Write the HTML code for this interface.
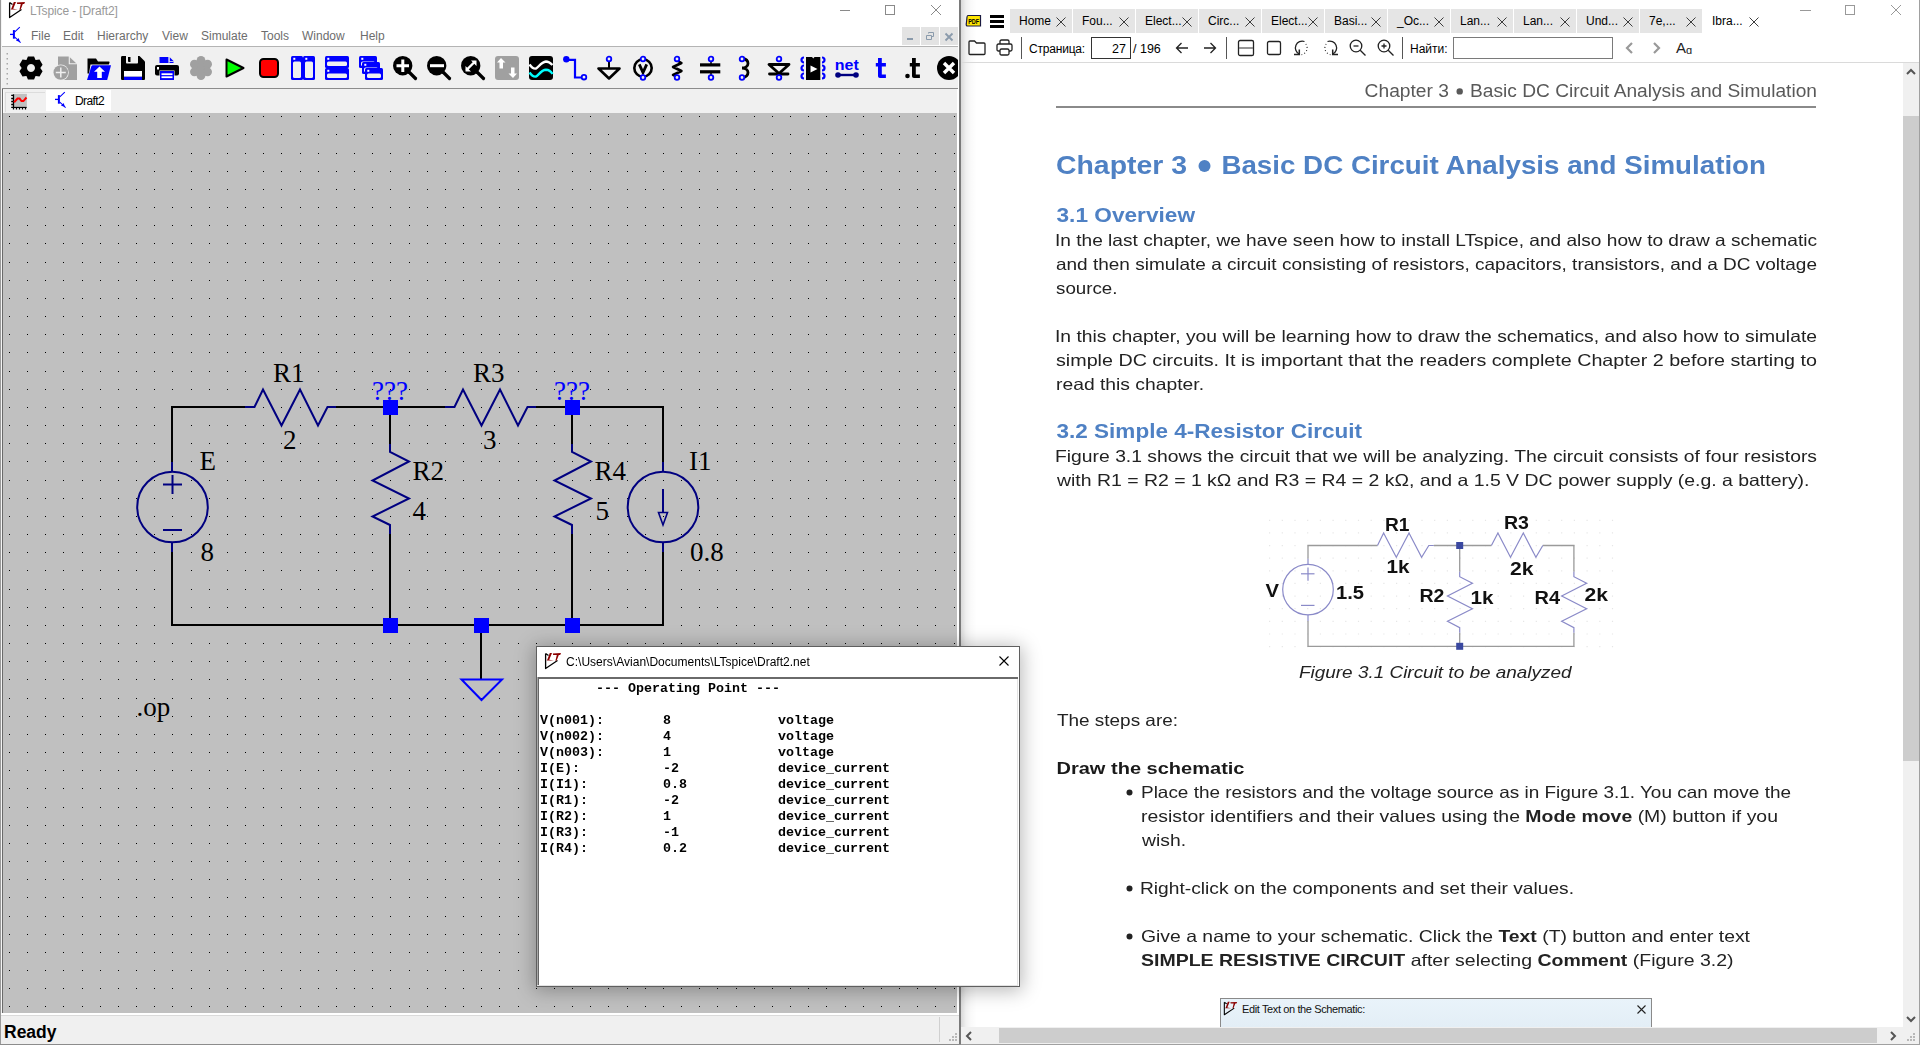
<!DOCTYPE html>
<html><head><meta charset="utf-8"><style>
*{box-sizing:border-box}
html,body{margin:0;padding:0}
body{width:1920px;height:1045px;position:relative;overflow:hidden;background:#fff;font-family:"Liberation Sans",sans-serif}
.a{position:absolute}
svg{position:absolute;overflow:visible}
</style></head><body>
<!-- LTspice window -->
<div class="a" style="left:0;top:0;width:961px;height:1045px;background:#fff"></div>
<div class="a" style="left:0;top:0;width:1px;height:1045px;background:#9a9a9a"></div>
<div class="a" style="left:959px;top:0;width:2px;height:1045px;background:#7a7a7a"></div>
<!-- title -->
<svg class="a" style="left:8px;top:1px" width="18" height="18" viewBox="0 0 18 18"><path d="M1.6 1.5V16.5L13.5 8.5M1.6 1.5L4.5 3.5" fill="none" stroke="#000" stroke-width="1.3" stroke-linejoin="round"/><path d="M5.8 1H8L5.2 7.8L9.8 8.6H2.6L3.4 7.6Z" fill="#8b0000"/><path d="M8.8 1.4L17 1.1L16.2 2.9H14.8L12.6 8.8H11.4L12.8 3H9.2Z" fill="#8b0000"/></svg>
<div class="a" style="left:30px;top:4px;font-size:12px;line-height:15px;color:#999;white-space:pre;letter-spacing:-0.12px">LTspice - [Draft2]</div>
<!-- window buttons -->
<div class="a" style="left:840px;top:10px;width:10px;height:1px;background:#8a8a8a"></div>
<div class="a" style="left:885px;top:5px;width:10px;height:10px;border:1px solid #8a8a8a"></div>
<svg class="a" style="left:931px;top:5px" width="10" height="10" viewBox="0 0 10 10"><path d="M0 0L10 10M10 0L0 10" stroke="#8a8a8a" stroke-width="1"/></svg>
<!-- menu -->
<svg class="a" style="left:8px;top:25px" width="14" height="19" viewBox="0 0 14 19"><path d="M2 9.4H5.5" stroke="#0000ff" stroke-width="1.3"/><rect x="4.9" y="5.1" width="2" height="8.6" fill="#0000ff"/><path d="M6.8 6.8L11.8 2.2M6.8 12.2L12.6 17.6" stroke="#0000ff" stroke-width="1.1" fill="none"/><path d="M8 15.7L10.6 13L11.9 16.8Z" fill="#0000ff"/></svg>
<div class="a" style="left:31px;top:29px;font-size:12px;line-height:15px;color:#6d6d6d;white-space:pre">File</div>
<div class="a" style="left:63px;top:29px;font-size:12px;line-height:15px;color:#6d6d6d;white-space:pre">Edit</div>
<div class="a" style="left:97px;top:29px;font-size:12px;line-height:15px;color:#6d6d6d;white-space:pre">Hierarchy</div>
<div class="a" style="left:162px;top:29px;font-size:12px;line-height:15px;color:#6d6d6d;white-space:pre">View</div>
<div class="a" style="left:201px;top:29px;font-size:12px;line-height:15px;color:#6d6d6d;white-space:pre">Simulate</div>
<div class="a" style="left:261px;top:29px;font-size:12px;line-height:15px;color:#6d6d6d;white-space:pre">Tools</div>
<div class="a" style="left:302px;top:29px;font-size:12px;line-height:15px;color:#6d6d6d;white-space:pre">Window</div>
<div class="a" style="left:360px;top:29px;font-size:12px;line-height:15px;color:#6d6d6d;white-space:pre">Help</div>
<!-- MDI buttons -->
<div class="a" style="left:902px;top:27px;width:18px;height:18px;background:#e3e3e3"></div>
<div class="a" style="left:921px;top:27px;width:18px;height:18px;background:#e3e3e3"></div>
<div class="a" style="left:940px;top:27px;width:18px;height:18px;background:#e3e3e3"></div>
<div class="a" style="left:907px;top:38px;width:6px;height:2px;background:#8a9aab"></div>
<svg class="a" style="left:926px;top:32px" width="8" height="8" viewBox="0 0 8 8"><path d="M0.5 3.5h5v4h-5zM2.5 1.5V0.5h5v4h-2" fill="none" stroke="#8a9aab" stroke-width="1"/></svg>
<svg class="a" style="left:945px;top:33px" width="8" height="8" viewBox="0 0 8 8"><path d="M0.5 0.5L7.5 7.5M7.5 0.5L0.5 7.5" stroke="#8a9aab" stroke-width="1.8"/></svg>
<!-- menu bottom / toolbar -->
<div class="a" style="left:1px;top:46px;width:957px;height:1px;background:#b4b4b4"></div>
<div class="a" style="left:1px;top:47px;width:957px;height:41px;background:#f0f0f0"></div>
<div class="a" style="left:1px;top:88px;width:957px;height:1px;background:#8c8c8c"></div><div class="a" style="left:2px;top:89px;width:956px;height:1px;background:#6a6a6a"></div><div class="a" style="left:3px;top:90px;width:955px;height:1px;background:#fafafa"></div>
<!-- tab bar -->
<div class="a" style="left:1px;top:89px;width:957px;height:24px;background:#f0f0f0"></div><div class="a" style="left:1px;top:0;width:1px;height:1044px;background:#f4f4f4"></div>
<div class="a" style="left:2px;top:89px;width:1px;height:925px;background:#6a6a6a"></div><div class="a" style="left:3px;top:90px;width:1px;height:23px;background:#fafafa"></div>
<div class="a" style="left:5px;top:92px;width:40px;height:20px;border-left:1px solid #dcdcdc;border-top:1px solid #dcdcdc"></div>
<div class="a" style="left:46px;top:90px;width:65px;height:21px;background:#fff"></div>
<!-- status bar -->
<div class="a" style="left:1px;top:1013px;width:958px;height:2px;background:#fff"></div>
<div class="a" style="left:1px;top:1015px;width:958px;height:1px;background:#dadada"></div>
<div class="a" style="left:1px;top:1016px;width:958px;height:28px;background:#f0f0f0"></div>
<div class="a" style="left:0px;top:1044px;width:961px;height:1px;background:#8c8c8c"></div>
<div class="a" style="left:939px;top:1017px;width:1px;height:25px;background:#d0d0d0"></div>
<div class="a" style="left:957px;top:89px;width:2px;height:924px;background:#fff"></div>
<div class="a" style="left:4px;top:1022px;font-size:17.5px;font-weight:bold;line-height:20px;color:#000;white-space:pre">Ready</div>
<svg class="a" style="left:949px;top:1033px" width="9" height="9" viewBox="0 0 9 9"><path d="M6 0h2v2h-2zM3 3h2v2h-2zM6 3h2v2h-2zM0 6h2v2h-2zM3 6h2v2h-2zM6 6h2v2h-2z" fill="#b8b8b8"/></svg>
<svg class="a" style="left:6px;top:52px" width="3" height="35" viewBox="0 0 3 35"><rect x="0.5" y="1" width="1.5" height="1.5" fill="#a8a8a8"/><rect x="0.5" y="6" width="1.5" height="1.5" fill="#a8a8a8"/><rect x="0.5" y="11" width="1.5" height="1.5" fill="#a8a8a8"/><rect x="0.5" y="16" width="1.5" height="1.5" fill="#a8a8a8"/><rect x="0.5" y="21" width="1.5" height="1.5" fill="#a8a8a8"/><rect x="0.5" y="26" width="1.5" height="1.5" fill="#a8a8a8"/><rect x="0.5" y="31" width="1.5" height="1.5" fill="#a8a8a8"/></svg><div class="a" style="left:0;top:0;width:958px;height:88px;overflow:hidden"><svg class="a" style="left:19px;top:56px" width="24" height="24" viewBox="0 0 24 24"><path fill-rule="evenodd" fill="#000" d="M7.45 3.89L8.93 0.40L15.07 0.40L16.55 3.89L16.75 4.01L20.51 3.54L23.58 8.85L21.30 11.88L21.30 12.12L23.58 15.15L20.51 20.46L16.75 19.99L16.55 20.11L15.07 23.60L8.93 23.60L7.45 20.11L7.25 19.99L3.49 20.46L0.42 15.15L2.70 12.12L2.70 11.88L0.42 8.85L3.49 3.54L7.25 4.01Z M12 8 a4 4 0 1 0 0.01 0Z"/></svg><svg class="a" style="left:53px;top:56px" width="24" height="24" viewBox="0 0 24 24"><path d="M5 0.5h11l8 7.5v16H5z" fill="#a0a0a0"/><path d="M16.3 0v7.8h8" fill="none" stroke="#f0f0f0" stroke-width="1.1"/><circle cx="7.8" cy="16.5" r="8" fill="#f0f0f0"/><circle cx="7.8" cy="16.5" r="7.3" fill="#a0a0a0"/><path d="M7.8 11.5v10M2.8 16.5h10" stroke="#f0f0f0" stroke-width="1.5"/></svg><svg class="a" style="left:87px;top:56px" width="24" height="24" viewBox="0 0 24 24"><path d="M0.5 2.5h8.5l2 3h10.5c0.8 0 1.2 0.5 1 1.2L21.8 8.5H3.5l-1.5 9H0.5z" fill="#000"/><path d="M0 24L4.3 10.5c0.3-0.8 0.8-1.2 1.6-1.2H24L20.2 24z" fill="#0000ff"/><path d="M12.5 10.5l5.5 5.2h-3.2v6.3h-4.6v-6.3H7z" fill="#fff"/></svg><svg class="a" style="left:121px;top:56px" width="24" height="24" viewBox="0 0 24 24"><path d="M1.5 0h17l5.5 5.5v17c0 1-0.5 1.5-1.5 1.5H1.5C0.5 24 0 23.5 0 22.5v-21C0 0.5 0.5 0 1.5 0z" fill="#000"/><path d="M5 0h12v6.5c0 0.5-0.5 1-1 1H6c-0.5 0-1-0.5-1-1z" fill="#f0f0f0"/><path d="M7 1h2.5v5h-1.5c-0.5 0-1-0.5-1-1z" fill="#000"/><rect x="3" y="15" width="18" height="5.8" fill="#fff"/><rect x="3" y="20.8" width="18" height="3.2" fill="#0000ff"/></svg><svg class="a" style="left:155px;top:56px" width="24" height="24" viewBox="0 0 24 24"><path d="M4.5 1h9v6h-9z" fill="#0000ff"/><path d="M14.5 1l4 4v2h-4z" fill="#0000ff"/><path d="M14.2 0.5v5h4.5" fill="none" stroke="#f0f0f0" stroke-width="0.8"/><rect x="0" y="9" width="24" height="10.5" rx="2" fill="#000"/><rect x="2" y="11" width="2" height="2.5" fill="#fff"/><rect x="4.5" y="14.5" width="15" height="9.5" fill="#f0f0f0"/><rect x="5" y="15" width="14" height="9" fill="#0000ff"/><rect x="6.5" y="17.3" width="11" height="1.8" fill="#fff"/><rect x="6.5" y="20.3" width="11" height="1.8" fill="#fff"/></svg><svg class="a" style="left:189px;top:56px" width="24" height="24" viewBox="0 0 24 24"><g fill="#a0a0a0"><circle cx="12" cy="12" r="8.8"/><circle cx="12.00" cy="4.40" r="4.4"/><circle cx="18.58" cy="8.20" r="4.4"/><circle cx="18.58" cy="15.80" r="4.4"/><circle cx="12.00" cy="19.60" r="4.4"/><circle cx="5.42" cy="15.80" r="4.4"/><circle cx="5.42" cy="8.20" r="4.4"/></g></svg><svg class="a" style="left:223px;top:56px" width="24" height="24" viewBox="0 0 24 24"><path d="M3.5 3.5L20.5 12L3.5 20.5Z" fill="#00ff00" stroke="#000" stroke-width="2" stroke-linejoin="round"/></svg><svg class="a" style="left:257px;top:56px" width="24" height="24" viewBox="0 0 24 24"><rect x="3" y="3" width="18" height="18" rx="3.5" fill="#ff0000" stroke="#000" stroke-width="2"/></svg><svg class="a" style="left:291px;top:56px" width="24" height="24" viewBox="0 0 24 24"><rect x="0" y="0" width="12" height="24" rx="1.5" fill="#0000ff"/><rect x="2" y="5.5" width="8" height="16.5" rx="1.5" fill="#f0f0f0"/><rect x="2.3" y="1.8" width="2" height="2" fill="#fff"/><rect x="12" y="0" width="12" height="24" rx="1.5" fill="#0000ff"/><rect x="14" y="5.5" width="8" height="16.5" rx="1.5" fill="#f0f0f0"/><rect x="14.3" y="1.8" width="2" height="2" fill="#fff"/></svg><svg class="a" style="left:325px;top:56px" width="24" height="24" viewBox="0 0 24 24"><rect x="0" y="0" width="24" height="12" rx="1.5" fill="#0000ff"/><rect x="2" y="5.5" width="20" height="4.5" rx="1.5" fill="#f0f0f0"/><rect x="2.3" y="1.8" width="2" height="2" fill="#fff"/><rect x="0" y="12" width="24" height="12" rx="1.5" fill="#0000ff"/><rect x="2" y="17.5" width="20" height="4.5" rx="1.5" fill="#f0f0f0"/><rect x="2.3" y="13.8" width="2" height="2" fill="#fff"/></svg><svg class="a" style="left:359px;top:56px" width="24" height="24" viewBox="0 0 24 24"><rect x="0" y="0" width="18" height="12" rx="1.5" fill="#0000ff"/><rect x="2" y="5.5" width="14" height="4.5" rx="1.5" fill="#f0f0f0"/><rect x="2.3" y="1.8" width="2" height="2" fill="#fff"/><rect x="3" y="6" width="18" height="12" rx="1.5" fill="#0000ff"/><rect x="5" y="11.5" width="14" height="4.5" rx="1.5" fill="#f0f0f0"/><rect x="5.3" y="7.8" width="2" height="2" fill="#fff"/><rect x="6" y="12" width="18" height="12" rx="1.5" fill="#0000ff"/><rect x="8" y="17.5" width="14" height="4.5" rx="1.5" fill="#f0f0f0"/><rect x="8.3" y="13.8" width="2" height="2" fill="#fff"/></svg><svg class="a" style="left:393px;top:56px" width="24" height="24" viewBox="0 0 24 24"><circle cx="9.7" cy="9.7" r="9.7" fill="#000"/><path d="M16 16L22.5 22.5" stroke="#000" stroke-width="3.2" stroke-linecap="round"/><path d="M3.5 9.8h12.5M9.8 3.5v12.5" stroke="#fff" stroke-width="3"/></svg><svg class="a" style="left:427px;top:56px" width="24" height="24" viewBox="0 0 24 24"><circle cx="9.7" cy="9.7" r="9.7" fill="#000"/><path d="M16 16L22.5 22.5" stroke="#000" stroke-width="3.2" stroke-linecap="round"/><rect x="3" y="8.2" width="14" height="3" fill="#fff"/></svg><svg class="a" style="left:461px;top:56px" width="24" height="24" viewBox="0 0 24 24"><circle cx="9.7" cy="9.7" r="9.7" fill="#000"/><path d="M16 16L22.5 22.5" stroke="#000" stroke-width="3.2" stroke-linecap="round"/><path d="M5.5 14L14 5.5" stroke="#fff" stroke-width="2.4"/><path d="M10 4.5h5.5v5.5zM4.5 10v5.5h5.5z" fill="#fff"/></svg><svg class="a" style="left:495px;top:56px" width="24" height="24" viewBox="0 0 24 24"><rect x="0" y="0" width="24" height="24" rx="3" fill="#a0a0a0"/><path d="M6 2.5L10.5 7H8v6H4.5V7H2z" fill="#fff" transform="translate(0,-0.5)"/><path d="M18 21.5L13.5 17H16V11h3.5v6H22z" fill="#fff" transform="translate(0,0.5)"/></svg><svg class="a" style="left:529px;top:56px" width="24" height="24" viewBox="0 0 24 24"><rect x="0" y="0" width="24" height="24" rx="3" fill="#000"/><path d="M0.5 8.5C3 12 5 13 7 12.5S12 6 17 5.5C20 5.5 22 7.5 23.5 9" fill="none" stroke="#fff" stroke-width="2.4"/><path d="M0.5 16.5C3 20 5 21 7 20.5S12 14 17 13.8C20 13.8 22 15.5 23.5 18" fill="none" stroke="#00ffff" stroke-width="2.4"/></svg><svg class="a" style="left:563px;top:56px" width="24" height="24" viewBox="0 0 24 24"><circle cx="3.3" cy="3.3" r="3.2" fill="#0000ff"/><path d="M3.3 3.8H12V21.5H19" fill="none" stroke="#0000ff" stroke-width="2.2"/><circle cx="21" cy="21.2" r="2.3" fill="#f0f0f0" stroke="#0000ff" stroke-width="1.8"/></svg><svg class="a" style="left:597px;top:56px" width="24" height="24" viewBox="0 0 24 24"><path d="M12 5v7" stroke="#000" stroke-width="2"/><path d="M1.5 12.5H22.5L12 22.5Z" fill="none" stroke="#000" stroke-width="2.6" stroke-linejoin="round"/><circle cx="12" cy="3" r="2.3" fill="#f0f0f0" stroke="#0000ff" stroke-width="1.8"/></svg><svg class="a" style="left:631px;top:56px" width="24" height="24" viewBox="0 0 24 24"><circle cx="12" cy="12" r="8.7" fill="none" stroke="#000" stroke-width="2.6"/><path d="M8.3 8.3L12 16.5L15.7 8.3" fill="none" stroke="#000" stroke-width="2.8" stroke-linejoin="miter"/><circle cx="12" cy="3" r="2.3" fill="#f0f0f0" stroke="#0000ff" stroke-width="1.8"/><circle cx="12" cy="21.5" r="2.3" fill="#f0f0f0" stroke="#0000ff" stroke-width="1.8"/></svg><svg class="a" style="left:665px;top:56px" width="24" height="24" viewBox="0 0 24 24"><path d="M12 4.5L16.5 7L8 11L16.5 15L8 19L12 21" fill="none" stroke="#000" stroke-width="2.5" stroke-linejoin="round" stroke-linecap="round"/><circle cx="12" cy="3" r="2.3" fill="#f0f0f0" stroke="#0000ff" stroke-width="1.8"/><circle cx="12" cy="21.5" r="2.3" fill="#f0f0f0" stroke="#0000ff" stroke-width="1.8"/></svg><svg class="a" style="left:699px;top:56px" width="24" height="24" viewBox="0 0 24 24"><path d="M12 5V9M12 16V20" stroke="#000" stroke-width="1.5"/><rect x="1" y="7.3" width="20.3" height="3.2" fill="#000"/><rect x="1" y="14.2" width="20.3" height="3.2" fill="#000"/><circle cx="12" cy="3" r="2.3" fill="#f0f0f0" stroke="#0000ff" stroke-width="1.8"/><circle cx="12" cy="21.5" r="2.3" fill="#f0f0f0" stroke="#0000ff" stroke-width="1.8"/></svg><svg class="a" style="left:733px;top:56px" width="24" height="24" viewBox="0 0 24 24"><path d="M9.5 2.5C13 3 15 5 15 7.5S12.5 12 9 12C12.5 12 15 14 15 16.5S13 21 9.5 21.5" fill="none" stroke="#000" stroke-width="2.8"/><circle cx="9" cy="3" r="2.3" fill="#f0f0f0" stroke="#0000ff" stroke-width="1.8"/><circle cx="9" cy="21.5" r="2.3" fill="#f0f0f0" stroke="#0000ff" stroke-width="1.8"/></svg><svg class="a" style="left:767px;top:56px" width="24" height="24" viewBox="0 0 24 24"><path d="M2 8.5H22L12 17.5Z" fill="none" stroke="#000" stroke-width="2.8" stroke-linejoin="round"/><path d="M2.5 18H21" stroke="#000" stroke-width="2.8" stroke-linecap="round"/><circle cx="12" cy="3" r="2.3" fill="#f0f0f0" stroke="#0000ff" stroke-width="1.8"/><circle cx="12" cy="21.5" r="2.3" fill="#f0f0f0" stroke="#0000ff" stroke-width="1.8"/></svg><svg class="a" style="left:801px;top:56px" width="24" height="24" viewBox="0 0 24 24"><path d="M3 1.5A2.5 2.5 0 0 0 3 6.5M3 9.5A2.5 2.5 0 0 0 3 14.5M3 17.5A2.5 2.5 0 0 0 3 22.5M21 1.5A2.5 2.5 0 0 1 21 6.5M21 9.5A2.5 2.5 0 0 1 21 14.5M21 17.5A2.5 2.5 0 0 1 21 22.5" stroke="#0000ff" stroke-width="2.2" fill="none"/><rect x="5" y="1" width="14.3" height="23" fill="#000"/><path d="M11 1h2.5l-1.2 1.5z" fill="#f0f0f0"/><path d="M9.5 9.5L16.5 13L9.5 16.5z" fill="#fff"/></svg><svg class="a" style="left:835px;top:56px" width="24" height="24" viewBox="0 0 24 24"><text x="-0.3" y="14" font-family="Liberation Sans" font-weight="bold" font-size="14" fill="#0000ff" textLength="24" lengthAdjust="spacingAndGlyphs">net</text><path d="M3 19H21" stroke="#000080" stroke-width="2.4"/><circle cx="3" cy="19" r="2.8" fill="#000080"/><circle cx="21" cy="19" r="2.8" fill="#000080"/></svg><svg class="a" style="left:869px;top:56px" width="24" height="24" viewBox="0 0 24 24"><path d="M9 2H12.8V7H16.9V10.5H12.8V18.5H16.9V22H11C9.8 22 9 21 9 20V10.5H6.8V7H9Z" fill="#0000ff"/></svg><svg class="a" style="left:903px;top:56px" width="24" height="24" viewBox="0 0 24 24"><circle cx="4.5" cy="20" r="2.3" fill="#000"/><path d="M9 2H12.8V7H16.9V10.5H12.8V18.5H16.9V22H11C9.8 22 9 21 9 20V10.5H6.8V7H9Z" fill="#000"/></svg><svg class="a" style="left:937px;top:56px" width="24" height="24" viewBox="0 0 24 24"><circle cx="12" cy="12" r="12" fill="#000"/><path d="M7 7L17 17M17 7L7 17" stroke="#fff" stroke-width="3.4"/></svg></div><svg class="a" style="left:8px;top:91px" width="22" height="22" viewBox="0 0 22 22"><rect x="6.1" y="2.9" width="12.8" height="12.5" fill="#c0c0c0"/><path d="M5.5 3.2V18.5M3.2 16.4H18.7M3.2 4.4H5.5M3.2 7.5H5.5M3.2 10.5H5.5M3.2 13.5H5.5M5.5 16.4V18.5M8.5 16.4V18.5M11.5 16.4V18.5M14.5 16.4V18.5M17.5 16.4V18.5" stroke="#000" stroke-width="1.3" fill="none"/><path d="M6.1 11.2L9.5 7.6H11.6L13.5 10.1H15.4L18.5 6.5" stroke="#ff0000" stroke-width="2" fill="none"/></svg><svg class="a" style="left:53px;top:90px" width="14" height="19" viewBox="0 0 14 19"><path d="M2 9.4H5.5" stroke="#0000ff" stroke-width="1.3"/><rect x="4.9" y="5.1" width="2" height="8.6" fill="#0000ff"/><path d="M6.8 6.8L11.8 2.2M6.8 12.2L12.6 17.6" stroke="#0000ff" stroke-width="1.1" fill="none"/><path d="M8 15.7L10.6 13L11.9 16.8Z" fill="#0000ff"/></svg><div class="a" style="left:75px;top:94px;font-size:12px;line-height:14px;color:#000;white-space:pre;letter-spacing:-0.6px">Draft2</div><svg class="a" style="left:0;top:0" width="1920" height="1045" viewBox="0 0 1920 1045"><defs><clipPath id="cv"><rect x="3" y="113" width="954" height="900"/></clipPath></defs><g clip-path="url(#cv)"><rect x="3" y="113" width="954" height="900" fill="#c0c0c0"/><path fill="#000" d="M9 116h1v1h-1zM27 116h1v1h-1zM45 116h1v1h-1zM63 116h1v1h-1zM82 116h1v1h-1zM100 116h1v1h-1zM118 116h1v1h-1zM136 116h1v1h-1zM154 116h1v1h-1zM172 116h1v1h-1zM191 116h1v1h-1zM209 116h1v1h-1zM227 116h1v1h-1zM245 116h1v1h-1zM263 116h1v1h-1zM281 116h1v1h-1zM300 116h1v1h-1zM318 116h1v1h-1zM336 116h1v1h-1zM354 116h1v1h-1zM372 116h1v1h-1zM390 116h1v1h-1zM409 116h1v1h-1zM427 116h1v1h-1zM445 116h1v1h-1zM463 116h1v1h-1zM481 116h1v1h-1zM499 116h1v1h-1zM518 116h1v1h-1zM536 116h1v1h-1zM554 116h1v1h-1zM572 116h1v1h-1zM590 116h1v1h-1zM608 116h1v1h-1zM627 116h1v1h-1zM645 116h1v1h-1zM663 116h1v1h-1zM681 116h1v1h-1zM699 116h1v1h-1zM717 116h1v1h-1zM736 116h1v1h-1zM754 116h1v1h-1zM772 116h1v1h-1zM790 116h1v1h-1zM808 116h1v1h-1zM826 116h1v1h-1zM845 116h1v1h-1zM863 116h1v1h-1zM881 116h1v1h-1zM899 116h1v1h-1zM917 116h1v1h-1zM935 116h1v1h-1zM954 116h1v1h-1zM9 134h1v1h-1zM27 134h1v1h-1zM45 134h1v1h-1zM63 134h1v1h-1zM82 134h1v1h-1zM100 134h1v1h-1zM118 134h1v1h-1zM136 134h1v1h-1zM154 134h1v1h-1zM172 134h1v1h-1zM191 134h1v1h-1zM209 134h1v1h-1zM227 134h1v1h-1zM245 134h1v1h-1zM263 134h1v1h-1zM281 134h1v1h-1zM300 134h1v1h-1zM318 134h1v1h-1zM336 134h1v1h-1zM354 134h1v1h-1zM372 134h1v1h-1zM390 134h1v1h-1zM409 134h1v1h-1zM427 134h1v1h-1zM445 134h1v1h-1zM463 134h1v1h-1zM481 134h1v1h-1zM499 134h1v1h-1zM518 134h1v1h-1zM536 134h1v1h-1zM554 134h1v1h-1zM572 134h1v1h-1zM590 134h1v1h-1zM608 134h1v1h-1zM627 134h1v1h-1zM645 134h1v1h-1zM663 134h1v1h-1zM681 134h1v1h-1zM699 134h1v1h-1zM717 134h1v1h-1zM736 134h1v1h-1zM754 134h1v1h-1zM772 134h1v1h-1zM790 134h1v1h-1zM808 134h1v1h-1zM826 134h1v1h-1zM845 134h1v1h-1zM863 134h1v1h-1zM881 134h1v1h-1zM899 134h1v1h-1zM917 134h1v1h-1zM935 134h1v1h-1zM954 134h1v1h-1zM9 153h1v1h-1zM27 153h1v1h-1zM45 153h1v1h-1zM63 153h1v1h-1zM82 153h1v1h-1zM100 153h1v1h-1zM118 153h1v1h-1zM136 153h1v1h-1zM154 153h1v1h-1zM172 153h1v1h-1zM191 153h1v1h-1zM209 153h1v1h-1zM227 153h1v1h-1zM245 153h1v1h-1zM263 153h1v1h-1zM281 153h1v1h-1zM300 153h1v1h-1zM318 153h1v1h-1zM336 153h1v1h-1zM354 153h1v1h-1zM372 153h1v1h-1zM390 153h1v1h-1zM409 153h1v1h-1zM427 153h1v1h-1zM445 153h1v1h-1zM463 153h1v1h-1zM481 153h1v1h-1zM499 153h1v1h-1zM518 153h1v1h-1zM536 153h1v1h-1zM554 153h1v1h-1zM572 153h1v1h-1zM590 153h1v1h-1zM608 153h1v1h-1zM627 153h1v1h-1zM645 153h1v1h-1zM663 153h1v1h-1zM681 153h1v1h-1zM699 153h1v1h-1zM717 153h1v1h-1zM736 153h1v1h-1zM754 153h1v1h-1zM772 153h1v1h-1zM790 153h1v1h-1zM808 153h1v1h-1zM826 153h1v1h-1zM845 153h1v1h-1zM863 153h1v1h-1zM881 153h1v1h-1zM899 153h1v1h-1zM917 153h1v1h-1zM935 153h1v1h-1zM954 153h1v1h-1zM9 171h1v1h-1zM27 171h1v1h-1zM45 171h1v1h-1zM63 171h1v1h-1zM82 171h1v1h-1zM100 171h1v1h-1zM118 171h1v1h-1zM136 171h1v1h-1zM154 171h1v1h-1zM172 171h1v1h-1zM191 171h1v1h-1zM209 171h1v1h-1zM227 171h1v1h-1zM245 171h1v1h-1zM263 171h1v1h-1zM281 171h1v1h-1zM300 171h1v1h-1zM318 171h1v1h-1zM336 171h1v1h-1zM354 171h1v1h-1zM372 171h1v1h-1zM390 171h1v1h-1zM409 171h1v1h-1zM427 171h1v1h-1zM445 171h1v1h-1zM463 171h1v1h-1zM481 171h1v1h-1zM499 171h1v1h-1zM518 171h1v1h-1zM536 171h1v1h-1zM554 171h1v1h-1zM572 171h1v1h-1zM590 171h1v1h-1zM608 171h1v1h-1zM627 171h1v1h-1zM645 171h1v1h-1zM663 171h1v1h-1zM681 171h1v1h-1zM699 171h1v1h-1zM717 171h1v1h-1zM736 171h1v1h-1zM754 171h1v1h-1zM772 171h1v1h-1zM790 171h1v1h-1zM808 171h1v1h-1zM826 171h1v1h-1zM845 171h1v1h-1zM863 171h1v1h-1zM881 171h1v1h-1zM899 171h1v1h-1zM917 171h1v1h-1zM935 171h1v1h-1zM954 171h1v1h-1zM9 189h1v1h-1zM27 189h1v1h-1zM45 189h1v1h-1zM63 189h1v1h-1zM82 189h1v1h-1zM100 189h1v1h-1zM118 189h1v1h-1zM136 189h1v1h-1zM154 189h1v1h-1zM172 189h1v1h-1zM191 189h1v1h-1zM209 189h1v1h-1zM227 189h1v1h-1zM245 189h1v1h-1zM263 189h1v1h-1zM281 189h1v1h-1zM300 189h1v1h-1zM318 189h1v1h-1zM336 189h1v1h-1zM354 189h1v1h-1zM372 189h1v1h-1zM390 189h1v1h-1zM409 189h1v1h-1zM427 189h1v1h-1zM445 189h1v1h-1zM463 189h1v1h-1zM481 189h1v1h-1zM499 189h1v1h-1zM518 189h1v1h-1zM536 189h1v1h-1zM554 189h1v1h-1zM572 189h1v1h-1zM590 189h1v1h-1zM608 189h1v1h-1zM627 189h1v1h-1zM645 189h1v1h-1zM663 189h1v1h-1zM681 189h1v1h-1zM699 189h1v1h-1zM717 189h1v1h-1zM736 189h1v1h-1zM754 189h1v1h-1zM772 189h1v1h-1zM790 189h1v1h-1zM808 189h1v1h-1zM826 189h1v1h-1zM845 189h1v1h-1zM863 189h1v1h-1zM881 189h1v1h-1zM899 189h1v1h-1zM917 189h1v1h-1zM935 189h1v1h-1zM954 189h1v1h-1zM9 207h1v1h-1zM27 207h1v1h-1zM45 207h1v1h-1zM63 207h1v1h-1zM82 207h1v1h-1zM100 207h1v1h-1zM118 207h1v1h-1zM136 207h1v1h-1zM154 207h1v1h-1zM172 207h1v1h-1zM191 207h1v1h-1zM209 207h1v1h-1zM227 207h1v1h-1zM245 207h1v1h-1zM263 207h1v1h-1zM281 207h1v1h-1zM300 207h1v1h-1zM318 207h1v1h-1zM336 207h1v1h-1zM354 207h1v1h-1zM372 207h1v1h-1zM390 207h1v1h-1zM409 207h1v1h-1zM427 207h1v1h-1zM445 207h1v1h-1zM463 207h1v1h-1zM481 207h1v1h-1zM499 207h1v1h-1zM518 207h1v1h-1zM536 207h1v1h-1zM554 207h1v1h-1zM572 207h1v1h-1zM590 207h1v1h-1zM608 207h1v1h-1zM627 207h1v1h-1zM645 207h1v1h-1zM663 207h1v1h-1zM681 207h1v1h-1zM699 207h1v1h-1zM717 207h1v1h-1zM736 207h1v1h-1zM754 207h1v1h-1zM772 207h1v1h-1zM790 207h1v1h-1zM808 207h1v1h-1zM826 207h1v1h-1zM845 207h1v1h-1zM863 207h1v1h-1zM881 207h1v1h-1zM899 207h1v1h-1zM917 207h1v1h-1zM935 207h1v1h-1zM954 207h1v1h-1zM9 225h1v1h-1zM27 225h1v1h-1zM45 225h1v1h-1zM63 225h1v1h-1zM82 225h1v1h-1zM100 225h1v1h-1zM118 225h1v1h-1zM136 225h1v1h-1zM154 225h1v1h-1zM172 225h1v1h-1zM191 225h1v1h-1zM209 225h1v1h-1zM227 225h1v1h-1zM245 225h1v1h-1zM263 225h1v1h-1zM281 225h1v1h-1zM300 225h1v1h-1zM318 225h1v1h-1zM336 225h1v1h-1zM354 225h1v1h-1zM372 225h1v1h-1zM390 225h1v1h-1zM409 225h1v1h-1zM427 225h1v1h-1zM445 225h1v1h-1zM463 225h1v1h-1zM481 225h1v1h-1zM499 225h1v1h-1zM518 225h1v1h-1zM536 225h1v1h-1zM554 225h1v1h-1zM572 225h1v1h-1zM590 225h1v1h-1zM608 225h1v1h-1zM627 225h1v1h-1zM645 225h1v1h-1zM663 225h1v1h-1zM681 225h1v1h-1zM699 225h1v1h-1zM717 225h1v1h-1zM736 225h1v1h-1zM754 225h1v1h-1zM772 225h1v1h-1zM790 225h1v1h-1zM808 225h1v1h-1zM826 225h1v1h-1zM845 225h1v1h-1zM863 225h1v1h-1zM881 225h1v1h-1zM899 225h1v1h-1zM917 225h1v1h-1zM935 225h1v1h-1zM954 225h1v1h-1zM9 243h1v1h-1zM27 243h1v1h-1zM45 243h1v1h-1zM63 243h1v1h-1zM82 243h1v1h-1zM100 243h1v1h-1zM118 243h1v1h-1zM136 243h1v1h-1zM154 243h1v1h-1zM172 243h1v1h-1zM191 243h1v1h-1zM209 243h1v1h-1zM227 243h1v1h-1zM245 243h1v1h-1zM263 243h1v1h-1zM281 243h1v1h-1zM300 243h1v1h-1zM318 243h1v1h-1zM336 243h1v1h-1zM354 243h1v1h-1zM372 243h1v1h-1zM390 243h1v1h-1zM409 243h1v1h-1zM427 243h1v1h-1zM445 243h1v1h-1zM463 243h1v1h-1zM481 243h1v1h-1zM499 243h1v1h-1zM518 243h1v1h-1zM536 243h1v1h-1zM554 243h1v1h-1zM572 243h1v1h-1zM590 243h1v1h-1zM608 243h1v1h-1zM627 243h1v1h-1zM645 243h1v1h-1zM663 243h1v1h-1zM681 243h1v1h-1zM699 243h1v1h-1zM717 243h1v1h-1zM736 243h1v1h-1zM754 243h1v1h-1zM772 243h1v1h-1zM790 243h1v1h-1zM808 243h1v1h-1zM826 243h1v1h-1zM845 243h1v1h-1zM863 243h1v1h-1zM881 243h1v1h-1zM899 243h1v1h-1zM917 243h1v1h-1zM935 243h1v1h-1zM954 243h1v1h-1zM9 262h1v1h-1zM27 262h1v1h-1zM45 262h1v1h-1zM63 262h1v1h-1zM82 262h1v1h-1zM100 262h1v1h-1zM118 262h1v1h-1zM136 262h1v1h-1zM154 262h1v1h-1zM172 262h1v1h-1zM191 262h1v1h-1zM209 262h1v1h-1zM227 262h1v1h-1zM245 262h1v1h-1zM263 262h1v1h-1zM281 262h1v1h-1zM300 262h1v1h-1zM318 262h1v1h-1zM336 262h1v1h-1zM354 262h1v1h-1zM372 262h1v1h-1zM390 262h1v1h-1zM409 262h1v1h-1zM427 262h1v1h-1zM445 262h1v1h-1zM463 262h1v1h-1zM481 262h1v1h-1zM499 262h1v1h-1zM518 262h1v1h-1zM536 262h1v1h-1zM554 262h1v1h-1zM572 262h1v1h-1zM590 262h1v1h-1zM608 262h1v1h-1zM627 262h1v1h-1zM645 262h1v1h-1zM663 262h1v1h-1zM681 262h1v1h-1zM699 262h1v1h-1zM717 262h1v1h-1zM736 262h1v1h-1zM754 262h1v1h-1zM772 262h1v1h-1zM790 262h1v1h-1zM808 262h1v1h-1zM826 262h1v1h-1zM845 262h1v1h-1zM863 262h1v1h-1zM881 262h1v1h-1zM899 262h1v1h-1zM917 262h1v1h-1zM935 262h1v1h-1zM954 262h1v1h-1zM9 280h1v1h-1zM27 280h1v1h-1zM45 280h1v1h-1zM63 280h1v1h-1zM82 280h1v1h-1zM100 280h1v1h-1zM118 280h1v1h-1zM136 280h1v1h-1zM154 280h1v1h-1zM172 280h1v1h-1zM191 280h1v1h-1zM209 280h1v1h-1zM227 280h1v1h-1zM245 280h1v1h-1zM263 280h1v1h-1zM281 280h1v1h-1zM300 280h1v1h-1zM318 280h1v1h-1zM336 280h1v1h-1zM354 280h1v1h-1zM372 280h1v1h-1zM390 280h1v1h-1zM409 280h1v1h-1zM427 280h1v1h-1zM445 280h1v1h-1zM463 280h1v1h-1zM481 280h1v1h-1zM499 280h1v1h-1zM518 280h1v1h-1zM536 280h1v1h-1zM554 280h1v1h-1zM572 280h1v1h-1zM590 280h1v1h-1zM608 280h1v1h-1zM627 280h1v1h-1zM645 280h1v1h-1zM663 280h1v1h-1zM681 280h1v1h-1zM699 280h1v1h-1zM717 280h1v1h-1zM736 280h1v1h-1zM754 280h1v1h-1zM772 280h1v1h-1zM790 280h1v1h-1zM808 280h1v1h-1zM826 280h1v1h-1zM845 280h1v1h-1zM863 280h1v1h-1zM881 280h1v1h-1zM899 280h1v1h-1zM917 280h1v1h-1zM935 280h1v1h-1zM954 280h1v1h-1zM9 298h1v1h-1zM27 298h1v1h-1zM45 298h1v1h-1zM63 298h1v1h-1zM82 298h1v1h-1zM100 298h1v1h-1zM118 298h1v1h-1zM136 298h1v1h-1zM154 298h1v1h-1zM172 298h1v1h-1zM191 298h1v1h-1zM209 298h1v1h-1zM227 298h1v1h-1zM245 298h1v1h-1zM263 298h1v1h-1zM281 298h1v1h-1zM300 298h1v1h-1zM318 298h1v1h-1zM336 298h1v1h-1zM354 298h1v1h-1zM372 298h1v1h-1zM390 298h1v1h-1zM409 298h1v1h-1zM427 298h1v1h-1zM445 298h1v1h-1zM463 298h1v1h-1zM481 298h1v1h-1zM499 298h1v1h-1zM518 298h1v1h-1zM536 298h1v1h-1zM554 298h1v1h-1zM572 298h1v1h-1zM590 298h1v1h-1zM608 298h1v1h-1zM627 298h1v1h-1zM645 298h1v1h-1zM663 298h1v1h-1zM681 298h1v1h-1zM699 298h1v1h-1zM717 298h1v1h-1zM736 298h1v1h-1zM754 298h1v1h-1zM772 298h1v1h-1zM790 298h1v1h-1zM808 298h1v1h-1zM826 298h1v1h-1zM845 298h1v1h-1zM863 298h1v1h-1zM881 298h1v1h-1zM899 298h1v1h-1zM917 298h1v1h-1zM935 298h1v1h-1zM954 298h1v1h-1zM9 316h1v1h-1zM27 316h1v1h-1zM45 316h1v1h-1zM63 316h1v1h-1zM82 316h1v1h-1zM100 316h1v1h-1zM118 316h1v1h-1zM136 316h1v1h-1zM154 316h1v1h-1zM172 316h1v1h-1zM191 316h1v1h-1zM209 316h1v1h-1zM227 316h1v1h-1zM245 316h1v1h-1zM263 316h1v1h-1zM281 316h1v1h-1zM300 316h1v1h-1zM318 316h1v1h-1zM336 316h1v1h-1zM354 316h1v1h-1zM372 316h1v1h-1zM390 316h1v1h-1zM409 316h1v1h-1zM427 316h1v1h-1zM445 316h1v1h-1zM463 316h1v1h-1zM481 316h1v1h-1zM499 316h1v1h-1zM518 316h1v1h-1zM536 316h1v1h-1zM554 316h1v1h-1zM572 316h1v1h-1zM590 316h1v1h-1zM608 316h1v1h-1zM627 316h1v1h-1zM645 316h1v1h-1zM663 316h1v1h-1zM681 316h1v1h-1zM699 316h1v1h-1zM717 316h1v1h-1zM736 316h1v1h-1zM754 316h1v1h-1zM772 316h1v1h-1zM790 316h1v1h-1zM808 316h1v1h-1zM826 316h1v1h-1zM845 316h1v1h-1zM863 316h1v1h-1zM881 316h1v1h-1zM899 316h1v1h-1zM917 316h1v1h-1zM935 316h1v1h-1zM954 316h1v1h-1zM9 334h1v1h-1zM27 334h1v1h-1zM45 334h1v1h-1zM63 334h1v1h-1zM82 334h1v1h-1zM100 334h1v1h-1zM118 334h1v1h-1zM136 334h1v1h-1zM154 334h1v1h-1zM172 334h1v1h-1zM191 334h1v1h-1zM209 334h1v1h-1zM227 334h1v1h-1zM245 334h1v1h-1zM263 334h1v1h-1zM281 334h1v1h-1zM300 334h1v1h-1zM318 334h1v1h-1zM336 334h1v1h-1zM354 334h1v1h-1zM372 334h1v1h-1zM390 334h1v1h-1zM409 334h1v1h-1zM427 334h1v1h-1zM445 334h1v1h-1zM463 334h1v1h-1zM481 334h1v1h-1zM499 334h1v1h-1zM518 334h1v1h-1zM536 334h1v1h-1zM554 334h1v1h-1zM572 334h1v1h-1zM590 334h1v1h-1zM608 334h1v1h-1zM627 334h1v1h-1zM645 334h1v1h-1zM663 334h1v1h-1zM681 334h1v1h-1zM699 334h1v1h-1zM717 334h1v1h-1zM736 334h1v1h-1zM754 334h1v1h-1zM772 334h1v1h-1zM790 334h1v1h-1zM808 334h1v1h-1zM826 334h1v1h-1zM845 334h1v1h-1zM863 334h1v1h-1zM881 334h1v1h-1zM899 334h1v1h-1zM917 334h1v1h-1zM935 334h1v1h-1zM954 334h1v1h-1zM9 352h1v1h-1zM27 352h1v1h-1zM45 352h1v1h-1zM63 352h1v1h-1zM82 352h1v1h-1zM100 352h1v1h-1zM118 352h1v1h-1zM136 352h1v1h-1zM154 352h1v1h-1zM172 352h1v1h-1zM191 352h1v1h-1zM209 352h1v1h-1zM227 352h1v1h-1zM245 352h1v1h-1zM263 352h1v1h-1zM281 352h1v1h-1zM300 352h1v1h-1zM318 352h1v1h-1zM336 352h1v1h-1zM354 352h1v1h-1zM372 352h1v1h-1zM390 352h1v1h-1zM409 352h1v1h-1zM427 352h1v1h-1zM445 352h1v1h-1zM463 352h1v1h-1zM481 352h1v1h-1zM499 352h1v1h-1zM518 352h1v1h-1zM536 352h1v1h-1zM554 352h1v1h-1zM572 352h1v1h-1zM590 352h1v1h-1zM608 352h1v1h-1zM627 352h1v1h-1zM645 352h1v1h-1zM663 352h1v1h-1zM681 352h1v1h-1zM699 352h1v1h-1zM717 352h1v1h-1zM736 352h1v1h-1zM754 352h1v1h-1zM772 352h1v1h-1zM790 352h1v1h-1zM808 352h1v1h-1zM826 352h1v1h-1zM845 352h1v1h-1zM863 352h1v1h-1zM881 352h1v1h-1zM899 352h1v1h-1zM917 352h1v1h-1zM935 352h1v1h-1zM954 352h1v1h-1zM9 371h1v1h-1zM27 371h1v1h-1zM45 371h1v1h-1zM63 371h1v1h-1zM82 371h1v1h-1zM100 371h1v1h-1zM118 371h1v1h-1zM136 371h1v1h-1zM154 371h1v1h-1zM172 371h1v1h-1zM191 371h1v1h-1zM209 371h1v1h-1zM227 371h1v1h-1zM245 371h1v1h-1zM263 371h1v1h-1zM281 371h1v1h-1zM300 371h1v1h-1zM318 371h1v1h-1zM336 371h1v1h-1zM354 371h1v1h-1zM372 371h1v1h-1zM390 371h1v1h-1zM409 371h1v1h-1zM427 371h1v1h-1zM445 371h1v1h-1zM463 371h1v1h-1zM481 371h1v1h-1zM499 371h1v1h-1zM518 371h1v1h-1zM536 371h1v1h-1zM554 371h1v1h-1zM572 371h1v1h-1zM590 371h1v1h-1zM608 371h1v1h-1zM627 371h1v1h-1zM645 371h1v1h-1zM663 371h1v1h-1zM681 371h1v1h-1zM699 371h1v1h-1zM717 371h1v1h-1zM736 371h1v1h-1zM754 371h1v1h-1zM772 371h1v1h-1zM790 371h1v1h-1zM808 371h1v1h-1zM826 371h1v1h-1zM845 371h1v1h-1zM863 371h1v1h-1zM881 371h1v1h-1zM899 371h1v1h-1zM917 371h1v1h-1zM935 371h1v1h-1zM954 371h1v1h-1zM9 389h1v1h-1zM27 389h1v1h-1zM45 389h1v1h-1zM63 389h1v1h-1zM82 389h1v1h-1zM100 389h1v1h-1zM118 389h1v1h-1zM136 389h1v1h-1zM154 389h1v1h-1zM172 389h1v1h-1zM191 389h1v1h-1zM209 389h1v1h-1zM227 389h1v1h-1zM245 389h1v1h-1zM263 389h1v1h-1zM281 389h1v1h-1zM300 389h1v1h-1zM318 389h1v1h-1zM336 389h1v1h-1zM354 389h1v1h-1zM372 389h1v1h-1zM390 389h1v1h-1zM409 389h1v1h-1zM427 389h1v1h-1zM445 389h1v1h-1zM463 389h1v1h-1zM481 389h1v1h-1zM499 389h1v1h-1zM518 389h1v1h-1zM536 389h1v1h-1zM554 389h1v1h-1zM572 389h1v1h-1zM590 389h1v1h-1zM608 389h1v1h-1zM627 389h1v1h-1zM645 389h1v1h-1zM663 389h1v1h-1zM681 389h1v1h-1zM699 389h1v1h-1zM717 389h1v1h-1zM736 389h1v1h-1zM754 389h1v1h-1zM772 389h1v1h-1zM790 389h1v1h-1zM808 389h1v1h-1zM826 389h1v1h-1zM845 389h1v1h-1zM863 389h1v1h-1zM881 389h1v1h-1zM899 389h1v1h-1zM917 389h1v1h-1zM935 389h1v1h-1zM954 389h1v1h-1zM9 407h1v1h-1zM27 407h1v1h-1zM45 407h1v1h-1zM63 407h1v1h-1zM82 407h1v1h-1zM100 407h1v1h-1zM118 407h1v1h-1zM136 407h1v1h-1zM154 407h1v1h-1zM172 407h1v1h-1zM191 407h1v1h-1zM209 407h1v1h-1zM227 407h1v1h-1zM245 407h1v1h-1zM263 407h1v1h-1zM281 407h1v1h-1zM300 407h1v1h-1zM318 407h1v1h-1zM336 407h1v1h-1zM354 407h1v1h-1zM372 407h1v1h-1zM390 407h1v1h-1zM409 407h1v1h-1zM427 407h1v1h-1zM445 407h1v1h-1zM463 407h1v1h-1zM481 407h1v1h-1zM499 407h1v1h-1zM518 407h1v1h-1zM536 407h1v1h-1zM554 407h1v1h-1zM572 407h1v1h-1zM590 407h1v1h-1zM608 407h1v1h-1zM627 407h1v1h-1zM645 407h1v1h-1zM663 407h1v1h-1zM681 407h1v1h-1zM699 407h1v1h-1zM717 407h1v1h-1zM736 407h1v1h-1zM754 407h1v1h-1zM772 407h1v1h-1zM790 407h1v1h-1zM808 407h1v1h-1zM826 407h1v1h-1zM845 407h1v1h-1zM863 407h1v1h-1zM881 407h1v1h-1zM899 407h1v1h-1zM917 407h1v1h-1zM935 407h1v1h-1zM954 407h1v1h-1zM9 425h1v1h-1zM27 425h1v1h-1zM45 425h1v1h-1zM63 425h1v1h-1zM82 425h1v1h-1zM100 425h1v1h-1zM118 425h1v1h-1zM136 425h1v1h-1zM154 425h1v1h-1zM172 425h1v1h-1zM191 425h1v1h-1zM209 425h1v1h-1zM227 425h1v1h-1zM245 425h1v1h-1zM263 425h1v1h-1zM281 425h1v1h-1zM300 425h1v1h-1zM318 425h1v1h-1zM336 425h1v1h-1zM354 425h1v1h-1zM372 425h1v1h-1zM390 425h1v1h-1zM409 425h1v1h-1zM427 425h1v1h-1zM445 425h1v1h-1zM463 425h1v1h-1zM481 425h1v1h-1zM499 425h1v1h-1zM518 425h1v1h-1zM536 425h1v1h-1zM554 425h1v1h-1zM572 425h1v1h-1zM590 425h1v1h-1zM608 425h1v1h-1zM627 425h1v1h-1zM645 425h1v1h-1zM663 425h1v1h-1zM681 425h1v1h-1zM699 425h1v1h-1zM717 425h1v1h-1zM736 425h1v1h-1zM754 425h1v1h-1zM772 425h1v1h-1zM790 425h1v1h-1zM808 425h1v1h-1zM826 425h1v1h-1zM845 425h1v1h-1zM863 425h1v1h-1zM881 425h1v1h-1zM899 425h1v1h-1zM917 425h1v1h-1zM935 425h1v1h-1zM954 425h1v1h-1zM9 443h1v1h-1zM27 443h1v1h-1zM45 443h1v1h-1zM63 443h1v1h-1zM82 443h1v1h-1zM100 443h1v1h-1zM118 443h1v1h-1zM136 443h1v1h-1zM154 443h1v1h-1zM172 443h1v1h-1zM191 443h1v1h-1zM209 443h1v1h-1zM227 443h1v1h-1zM245 443h1v1h-1zM263 443h1v1h-1zM281 443h1v1h-1zM300 443h1v1h-1zM318 443h1v1h-1zM336 443h1v1h-1zM354 443h1v1h-1zM372 443h1v1h-1zM390 443h1v1h-1zM409 443h1v1h-1zM427 443h1v1h-1zM445 443h1v1h-1zM463 443h1v1h-1zM481 443h1v1h-1zM499 443h1v1h-1zM518 443h1v1h-1zM536 443h1v1h-1zM554 443h1v1h-1zM572 443h1v1h-1zM590 443h1v1h-1zM608 443h1v1h-1zM627 443h1v1h-1zM645 443h1v1h-1zM663 443h1v1h-1zM681 443h1v1h-1zM699 443h1v1h-1zM717 443h1v1h-1zM736 443h1v1h-1zM754 443h1v1h-1zM772 443h1v1h-1zM790 443h1v1h-1zM808 443h1v1h-1zM826 443h1v1h-1zM845 443h1v1h-1zM863 443h1v1h-1zM881 443h1v1h-1zM899 443h1v1h-1zM917 443h1v1h-1zM935 443h1v1h-1zM954 443h1v1h-1zM9 461h1v1h-1zM27 461h1v1h-1zM45 461h1v1h-1zM63 461h1v1h-1zM82 461h1v1h-1zM100 461h1v1h-1zM118 461h1v1h-1zM136 461h1v1h-1zM154 461h1v1h-1zM172 461h1v1h-1zM191 461h1v1h-1zM209 461h1v1h-1zM227 461h1v1h-1zM245 461h1v1h-1zM263 461h1v1h-1zM281 461h1v1h-1zM300 461h1v1h-1zM318 461h1v1h-1zM336 461h1v1h-1zM354 461h1v1h-1zM372 461h1v1h-1zM390 461h1v1h-1zM409 461h1v1h-1zM427 461h1v1h-1zM445 461h1v1h-1zM463 461h1v1h-1zM481 461h1v1h-1zM499 461h1v1h-1zM518 461h1v1h-1zM536 461h1v1h-1zM554 461h1v1h-1zM572 461h1v1h-1zM590 461h1v1h-1zM608 461h1v1h-1zM627 461h1v1h-1zM645 461h1v1h-1zM663 461h1v1h-1zM681 461h1v1h-1zM699 461h1v1h-1zM717 461h1v1h-1zM736 461h1v1h-1zM754 461h1v1h-1zM772 461h1v1h-1zM790 461h1v1h-1zM808 461h1v1h-1zM826 461h1v1h-1zM845 461h1v1h-1zM863 461h1v1h-1zM881 461h1v1h-1zM899 461h1v1h-1zM917 461h1v1h-1zM935 461h1v1h-1zM954 461h1v1h-1zM9 480h1v1h-1zM27 480h1v1h-1zM45 480h1v1h-1zM63 480h1v1h-1zM82 480h1v1h-1zM100 480h1v1h-1zM118 480h1v1h-1zM136 480h1v1h-1zM154 480h1v1h-1zM172 480h1v1h-1zM191 480h1v1h-1zM209 480h1v1h-1zM227 480h1v1h-1zM245 480h1v1h-1zM263 480h1v1h-1zM281 480h1v1h-1zM300 480h1v1h-1zM318 480h1v1h-1zM336 480h1v1h-1zM354 480h1v1h-1zM372 480h1v1h-1zM390 480h1v1h-1zM409 480h1v1h-1zM427 480h1v1h-1zM445 480h1v1h-1zM463 480h1v1h-1zM481 480h1v1h-1zM499 480h1v1h-1zM518 480h1v1h-1zM536 480h1v1h-1zM554 480h1v1h-1zM572 480h1v1h-1zM590 480h1v1h-1zM608 480h1v1h-1zM627 480h1v1h-1zM645 480h1v1h-1zM663 480h1v1h-1zM681 480h1v1h-1zM699 480h1v1h-1zM717 480h1v1h-1zM736 480h1v1h-1zM754 480h1v1h-1zM772 480h1v1h-1zM790 480h1v1h-1zM808 480h1v1h-1zM826 480h1v1h-1zM845 480h1v1h-1zM863 480h1v1h-1zM881 480h1v1h-1zM899 480h1v1h-1zM917 480h1v1h-1zM935 480h1v1h-1zM954 480h1v1h-1zM9 498h1v1h-1zM27 498h1v1h-1zM45 498h1v1h-1zM63 498h1v1h-1zM82 498h1v1h-1zM100 498h1v1h-1zM118 498h1v1h-1zM136 498h1v1h-1zM154 498h1v1h-1zM172 498h1v1h-1zM191 498h1v1h-1zM209 498h1v1h-1zM227 498h1v1h-1zM245 498h1v1h-1zM263 498h1v1h-1zM281 498h1v1h-1zM300 498h1v1h-1zM318 498h1v1h-1zM336 498h1v1h-1zM354 498h1v1h-1zM372 498h1v1h-1zM390 498h1v1h-1zM409 498h1v1h-1zM427 498h1v1h-1zM445 498h1v1h-1zM463 498h1v1h-1zM481 498h1v1h-1zM499 498h1v1h-1zM518 498h1v1h-1zM536 498h1v1h-1zM554 498h1v1h-1zM572 498h1v1h-1zM590 498h1v1h-1zM608 498h1v1h-1zM627 498h1v1h-1zM645 498h1v1h-1zM663 498h1v1h-1zM681 498h1v1h-1zM699 498h1v1h-1zM717 498h1v1h-1zM736 498h1v1h-1zM754 498h1v1h-1zM772 498h1v1h-1zM790 498h1v1h-1zM808 498h1v1h-1zM826 498h1v1h-1zM845 498h1v1h-1zM863 498h1v1h-1zM881 498h1v1h-1zM899 498h1v1h-1zM917 498h1v1h-1zM935 498h1v1h-1zM954 498h1v1h-1zM9 516h1v1h-1zM27 516h1v1h-1zM45 516h1v1h-1zM63 516h1v1h-1zM82 516h1v1h-1zM100 516h1v1h-1zM118 516h1v1h-1zM136 516h1v1h-1zM154 516h1v1h-1zM172 516h1v1h-1zM191 516h1v1h-1zM209 516h1v1h-1zM227 516h1v1h-1zM245 516h1v1h-1zM263 516h1v1h-1zM281 516h1v1h-1zM300 516h1v1h-1zM318 516h1v1h-1zM336 516h1v1h-1zM354 516h1v1h-1zM372 516h1v1h-1zM390 516h1v1h-1zM409 516h1v1h-1zM427 516h1v1h-1zM445 516h1v1h-1zM463 516h1v1h-1zM481 516h1v1h-1zM499 516h1v1h-1zM518 516h1v1h-1zM536 516h1v1h-1zM554 516h1v1h-1zM572 516h1v1h-1zM590 516h1v1h-1zM608 516h1v1h-1zM627 516h1v1h-1zM645 516h1v1h-1zM663 516h1v1h-1zM681 516h1v1h-1zM699 516h1v1h-1zM717 516h1v1h-1zM736 516h1v1h-1zM754 516h1v1h-1zM772 516h1v1h-1zM790 516h1v1h-1zM808 516h1v1h-1zM826 516h1v1h-1zM845 516h1v1h-1zM863 516h1v1h-1zM881 516h1v1h-1zM899 516h1v1h-1zM917 516h1v1h-1zM935 516h1v1h-1zM954 516h1v1h-1zM9 534h1v1h-1zM27 534h1v1h-1zM45 534h1v1h-1zM63 534h1v1h-1zM82 534h1v1h-1zM100 534h1v1h-1zM118 534h1v1h-1zM136 534h1v1h-1zM154 534h1v1h-1zM172 534h1v1h-1zM191 534h1v1h-1zM209 534h1v1h-1zM227 534h1v1h-1zM245 534h1v1h-1zM263 534h1v1h-1zM281 534h1v1h-1zM300 534h1v1h-1zM318 534h1v1h-1zM336 534h1v1h-1zM354 534h1v1h-1zM372 534h1v1h-1zM390 534h1v1h-1zM409 534h1v1h-1zM427 534h1v1h-1zM445 534h1v1h-1zM463 534h1v1h-1zM481 534h1v1h-1zM499 534h1v1h-1zM518 534h1v1h-1zM536 534h1v1h-1zM554 534h1v1h-1zM572 534h1v1h-1zM590 534h1v1h-1zM608 534h1v1h-1zM627 534h1v1h-1zM645 534h1v1h-1zM663 534h1v1h-1zM681 534h1v1h-1zM699 534h1v1h-1zM717 534h1v1h-1zM736 534h1v1h-1zM754 534h1v1h-1zM772 534h1v1h-1zM790 534h1v1h-1zM808 534h1v1h-1zM826 534h1v1h-1zM845 534h1v1h-1zM863 534h1v1h-1zM881 534h1v1h-1zM899 534h1v1h-1zM917 534h1v1h-1zM935 534h1v1h-1zM954 534h1v1h-1zM9 552h1v1h-1zM27 552h1v1h-1zM45 552h1v1h-1zM63 552h1v1h-1zM82 552h1v1h-1zM100 552h1v1h-1zM118 552h1v1h-1zM136 552h1v1h-1zM154 552h1v1h-1zM172 552h1v1h-1zM191 552h1v1h-1zM209 552h1v1h-1zM227 552h1v1h-1zM245 552h1v1h-1zM263 552h1v1h-1zM281 552h1v1h-1zM300 552h1v1h-1zM318 552h1v1h-1zM336 552h1v1h-1zM354 552h1v1h-1zM372 552h1v1h-1zM390 552h1v1h-1zM409 552h1v1h-1zM427 552h1v1h-1zM445 552h1v1h-1zM463 552h1v1h-1zM481 552h1v1h-1zM499 552h1v1h-1zM518 552h1v1h-1zM536 552h1v1h-1zM554 552h1v1h-1zM572 552h1v1h-1zM590 552h1v1h-1zM608 552h1v1h-1zM627 552h1v1h-1zM645 552h1v1h-1zM663 552h1v1h-1zM681 552h1v1h-1zM699 552h1v1h-1zM717 552h1v1h-1zM736 552h1v1h-1zM754 552h1v1h-1zM772 552h1v1h-1zM790 552h1v1h-1zM808 552h1v1h-1zM826 552h1v1h-1zM845 552h1v1h-1zM863 552h1v1h-1zM881 552h1v1h-1zM899 552h1v1h-1zM917 552h1v1h-1zM935 552h1v1h-1zM954 552h1v1h-1zM9 570h1v1h-1zM27 570h1v1h-1zM45 570h1v1h-1zM63 570h1v1h-1zM82 570h1v1h-1zM100 570h1v1h-1zM118 570h1v1h-1zM136 570h1v1h-1zM154 570h1v1h-1zM172 570h1v1h-1zM191 570h1v1h-1zM209 570h1v1h-1zM227 570h1v1h-1zM245 570h1v1h-1zM263 570h1v1h-1zM281 570h1v1h-1zM300 570h1v1h-1zM318 570h1v1h-1zM336 570h1v1h-1zM354 570h1v1h-1zM372 570h1v1h-1zM390 570h1v1h-1zM409 570h1v1h-1zM427 570h1v1h-1zM445 570h1v1h-1zM463 570h1v1h-1zM481 570h1v1h-1zM499 570h1v1h-1zM518 570h1v1h-1zM536 570h1v1h-1zM554 570h1v1h-1zM572 570h1v1h-1zM590 570h1v1h-1zM608 570h1v1h-1zM627 570h1v1h-1zM645 570h1v1h-1zM663 570h1v1h-1zM681 570h1v1h-1zM699 570h1v1h-1zM717 570h1v1h-1zM736 570h1v1h-1zM754 570h1v1h-1zM772 570h1v1h-1zM790 570h1v1h-1zM808 570h1v1h-1zM826 570h1v1h-1zM845 570h1v1h-1zM863 570h1v1h-1zM881 570h1v1h-1zM899 570h1v1h-1zM917 570h1v1h-1zM935 570h1v1h-1zM954 570h1v1h-1zM9 589h1v1h-1zM27 589h1v1h-1zM45 589h1v1h-1zM63 589h1v1h-1zM82 589h1v1h-1zM100 589h1v1h-1zM118 589h1v1h-1zM136 589h1v1h-1zM154 589h1v1h-1zM172 589h1v1h-1zM191 589h1v1h-1zM209 589h1v1h-1zM227 589h1v1h-1zM245 589h1v1h-1zM263 589h1v1h-1zM281 589h1v1h-1zM300 589h1v1h-1zM318 589h1v1h-1zM336 589h1v1h-1zM354 589h1v1h-1zM372 589h1v1h-1zM390 589h1v1h-1zM409 589h1v1h-1zM427 589h1v1h-1zM445 589h1v1h-1zM463 589h1v1h-1zM481 589h1v1h-1zM499 589h1v1h-1zM518 589h1v1h-1zM536 589h1v1h-1zM554 589h1v1h-1zM572 589h1v1h-1zM590 589h1v1h-1zM608 589h1v1h-1zM627 589h1v1h-1zM645 589h1v1h-1zM663 589h1v1h-1zM681 589h1v1h-1zM699 589h1v1h-1zM717 589h1v1h-1zM736 589h1v1h-1zM754 589h1v1h-1zM772 589h1v1h-1zM790 589h1v1h-1zM808 589h1v1h-1zM826 589h1v1h-1zM845 589h1v1h-1zM863 589h1v1h-1zM881 589h1v1h-1zM899 589h1v1h-1zM917 589h1v1h-1zM935 589h1v1h-1zM954 589h1v1h-1zM9 607h1v1h-1zM27 607h1v1h-1zM45 607h1v1h-1zM63 607h1v1h-1zM82 607h1v1h-1zM100 607h1v1h-1zM118 607h1v1h-1zM136 607h1v1h-1zM154 607h1v1h-1zM172 607h1v1h-1zM191 607h1v1h-1zM209 607h1v1h-1zM227 607h1v1h-1zM245 607h1v1h-1zM263 607h1v1h-1zM281 607h1v1h-1zM300 607h1v1h-1zM318 607h1v1h-1zM336 607h1v1h-1zM354 607h1v1h-1zM372 607h1v1h-1zM390 607h1v1h-1zM409 607h1v1h-1zM427 607h1v1h-1zM445 607h1v1h-1zM463 607h1v1h-1zM481 607h1v1h-1zM499 607h1v1h-1zM518 607h1v1h-1zM536 607h1v1h-1zM554 607h1v1h-1zM572 607h1v1h-1zM590 607h1v1h-1zM608 607h1v1h-1zM627 607h1v1h-1zM645 607h1v1h-1zM663 607h1v1h-1zM681 607h1v1h-1zM699 607h1v1h-1zM717 607h1v1h-1zM736 607h1v1h-1zM754 607h1v1h-1zM772 607h1v1h-1zM790 607h1v1h-1zM808 607h1v1h-1zM826 607h1v1h-1zM845 607h1v1h-1zM863 607h1v1h-1zM881 607h1v1h-1zM899 607h1v1h-1zM917 607h1v1h-1zM935 607h1v1h-1zM954 607h1v1h-1zM9 625h1v1h-1zM27 625h1v1h-1zM45 625h1v1h-1zM63 625h1v1h-1zM82 625h1v1h-1zM100 625h1v1h-1zM118 625h1v1h-1zM136 625h1v1h-1zM154 625h1v1h-1zM172 625h1v1h-1zM191 625h1v1h-1zM209 625h1v1h-1zM227 625h1v1h-1zM245 625h1v1h-1zM263 625h1v1h-1zM281 625h1v1h-1zM300 625h1v1h-1zM318 625h1v1h-1zM336 625h1v1h-1zM354 625h1v1h-1zM372 625h1v1h-1zM390 625h1v1h-1zM409 625h1v1h-1zM427 625h1v1h-1zM445 625h1v1h-1zM463 625h1v1h-1zM481 625h1v1h-1zM499 625h1v1h-1zM518 625h1v1h-1zM536 625h1v1h-1zM554 625h1v1h-1zM572 625h1v1h-1zM590 625h1v1h-1zM608 625h1v1h-1zM627 625h1v1h-1zM645 625h1v1h-1zM663 625h1v1h-1zM681 625h1v1h-1zM699 625h1v1h-1zM717 625h1v1h-1zM736 625h1v1h-1zM754 625h1v1h-1zM772 625h1v1h-1zM790 625h1v1h-1zM808 625h1v1h-1zM826 625h1v1h-1zM845 625h1v1h-1zM863 625h1v1h-1zM881 625h1v1h-1zM899 625h1v1h-1zM917 625h1v1h-1zM935 625h1v1h-1zM954 625h1v1h-1zM9 643h1v1h-1zM27 643h1v1h-1zM45 643h1v1h-1zM63 643h1v1h-1zM82 643h1v1h-1zM100 643h1v1h-1zM118 643h1v1h-1zM136 643h1v1h-1zM154 643h1v1h-1zM172 643h1v1h-1zM191 643h1v1h-1zM209 643h1v1h-1zM227 643h1v1h-1zM245 643h1v1h-1zM263 643h1v1h-1zM281 643h1v1h-1zM300 643h1v1h-1zM318 643h1v1h-1zM336 643h1v1h-1zM354 643h1v1h-1zM372 643h1v1h-1zM390 643h1v1h-1zM409 643h1v1h-1zM427 643h1v1h-1zM445 643h1v1h-1zM463 643h1v1h-1zM481 643h1v1h-1zM499 643h1v1h-1zM518 643h1v1h-1zM536 643h1v1h-1zM554 643h1v1h-1zM572 643h1v1h-1zM590 643h1v1h-1zM608 643h1v1h-1zM627 643h1v1h-1zM645 643h1v1h-1zM663 643h1v1h-1zM681 643h1v1h-1zM699 643h1v1h-1zM717 643h1v1h-1zM736 643h1v1h-1zM754 643h1v1h-1zM772 643h1v1h-1zM790 643h1v1h-1zM808 643h1v1h-1zM826 643h1v1h-1zM845 643h1v1h-1zM863 643h1v1h-1zM881 643h1v1h-1zM899 643h1v1h-1zM917 643h1v1h-1zM935 643h1v1h-1zM954 643h1v1h-1zM9 661h1v1h-1zM27 661h1v1h-1zM45 661h1v1h-1zM63 661h1v1h-1zM82 661h1v1h-1zM100 661h1v1h-1zM118 661h1v1h-1zM136 661h1v1h-1zM154 661h1v1h-1zM172 661h1v1h-1zM191 661h1v1h-1zM209 661h1v1h-1zM227 661h1v1h-1zM245 661h1v1h-1zM263 661h1v1h-1zM281 661h1v1h-1zM300 661h1v1h-1zM318 661h1v1h-1zM336 661h1v1h-1zM354 661h1v1h-1zM372 661h1v1h-1zM390 661h1v1h-1zM409 661h1v1h-1zM427 661h1v1h-1zM445 661h1v1h-1zM463 661h1v1h-1zM481 661h1v1h-1zM499 661h1v1h-1zM518 661h1v1h-1zM536 661h1v1h-1zM554 661h1v1h-1zM572 661h1v1h-1zM590 661h1v1h-1zM608 661h1v1h-1zM627 661h1v1h-1zM645 661h1v1h-1zM663 661h1v1h-1zM681 661h1v1h-1zM699 661h1v1h-1zM717 661h1v1h-1zM736 661h1v1h-1zM754 661h1v1h-1zM772 661h1v1h-1zM790 661h1v1h-1zM808 661h1v1h-1zM826 661h1v1h-1zM845 661h1v1h-1zM863 661h1v1h-1zM881 661h1v1h-1zM899 661h1v1h-1zM917 661h1v1h-1zM935 661h1v1h-1zM954 661h1v1h-1zM9 679h1v1h-1zM27 679h1v1h-1zM45 679h1v1h-1zM63 679h1v1h-1zM82 679h1v1h-1zM100 679h1v1h-1zM118 679h1v1h-1zM136 679h1v1h-1zM154 679h1v1h-1zM172 679h1v1h-1zM191 679h1v1h-1zM209 679h1v1h-1zM227 679h1v1h-1zM245 679h1v1h-1zM263 679h1v1h-1zM281 679h1v1h-1zM300 679h1v1h-1zM318 679h1v1h-1zM336 679h1v1h-1zM354 679h1v1h-1zM372 679h1v1h-1zM390 679h1v1h-1zM409 679h1v1h-1zM427 679h1v1h-1zM445 679h1v1h-1zM463 679h1v1h-1zM481 679h1v1h-1zM499 679h1v1h-1zM518 679h1v1h-1zM536 679h1v1h-1zM554 679h1v1h-1zM572 679h1v1h-1zM590 679h1v1h-1zM608 679h1v1h-1zM627 679h1v1h-1zM645 679h1v1h-1zM663 679h1v1h-1zM681 679h1v1h-1zM699 679h1v1h-1zM717 679h1v1h-1zM736 679h1v1h-1zM754 679h1v1h-1zM772 679h1v1h-1zM790 679h1v1h-1zM808 679h1v1h-1zM826 679h1v1h-1zM845 679h1v1h-1zM863 679h1v1h-1zM881 679h1v1h-1zM899 679h1v1h-1zM917 679h1v1h-1zM935 679h1v1h-1zM954 679h1v1h-1zM9 698h1v1h-1zM27 698h1v1h-1zM45 698h1v1h-1zM63 698h1v1h-1zM82 698h1v1h-1zM100 698h1v1h-1zM118 698h1v1h-1zM136 698h1v1h-1zM154 698h1v1h-1zM172 698h1v1h-1zM191 698h1v1h-1zM209 698h1v1h-1zM227 698h1v1h-1zM245 698h1v1h-1zM263 698h1v1h-1zM281 698h1v1h-1zM300 698h1v1h-1zM318 698h1v1h-1zM336 698h1v1h-1zM354 698h1v1h-1zM372 698h1v1h-1zM390 698h1v1h-1zM409 698h1v1h-1zM427 698h1v1h-1zM445 698h1v1h-1zM463 698h1v1h-1zM481 698h1v1h-1zM499 698h1v1h-1zM518 698h1v1h-1zM536 698h1v1h-1zM554 698h1v1h-1zM572 698h1v1h-1zM590 698h1v1h-1zM608 698h1v1h-1zM627 698h1v1h-1zM645 698h1v1h-1zM663 698h1v1h-1zM681 698h1v1h-1zM699 698h1v1h-1zM717 698h1v1h-1zM736 698h1v1h-1zM754 698h1v1h-1zM772 698h1v1h-1zM790 698h1v1h-1zM808 698h1v1h-1zM826 698h1v1h-1zM845 698h1v1h-1zM863 698h1v1h-1zM881 698h1v1h-1zM899 698h1v1h-1zM917 698h1v1h-1zM935 698h1v1h-1zM954 698h1v1h-1zM9 716h1v1h-1zM27 716h1v1h-1zM45 716h1v1h-1zM63 716h1v1h-1zM82 716h1v1h-1zM100 716h1v1h-1zM118 716h1v1h-1zM136 716h1v1h-1zM154 716h1v1h-1zM172 716h1v1h-1zM191 716h1v1h-1zM209 716h1v1h-1zM227 716h1v1h-1zM245 716h1v1h-1zM263 716h1v1h-1zM281 716h1v1h-1zM300 716h1v1h-1zM318 716h1v1h-1zM336 716h1v1h-1zM354 716h1v1h-1zM372 716h1v1h-1zM390 716h1v1h-1zM409 716h1v1h-1zM427 716h1v1h-1zM445 716h1v1h-1zM463 716h1v1h-1zM481 716h1v1h-1zM499 716h1v1h-1zM518 716h1v1h-1zM536 716h1v1h-1zM554 716h1v1h-1zM572 716h1v1h-1zM590 716h1v1h-1zM608 716h1v1h-1zM627 716h1v1h-1zM645 716h1v1h-1zM663 716h1v1h-1zM681 716h1v1h-1zM699 716h1v1h-1zM717 716h1v1h-1zM736 716h1v1h-1zM754 716h1v1h-1zM772 716h1v1h-1zM790 716h1v1h-1zM808 716h1v1h-1zM826 716h1v1h-1zM845 716h1v1h-1zM863 716h1v1h-1zM881 716h1v1h-1zM899 716h1v1h-1zM917 716h1v1h-1zM935 716h1v1h-1zM954 716h1v1h-1zM9 734h1v1h-1zM27 734h1v1h-1zM45 734h1v1h-1zM63 734h1v1h-1zM82 734h1v1h-1zM100 734h1v1h-1zM118 734h1v1h-1zM136 734h1v1h-1zM154 734h1v1h-1zM172 734h1v1h-1zM191 734h1v1h-1zM209 734h1v1h-1zM227 734h1v1h-1zM245 734h1v1h-1zM263 734h1v1h-1zM281 734h1v1h-1zM300 734h1v1h-1zM318 734h1v1h-1zM336 734h1v1h-1zM354 734h1v1h-1zM372 734h1v1h-1zM390 734h1v1h-1zM409 734h1v1h-1zM427 734h1v1h-1zM445 734h1v1h-1zM463 734h1v1h-1zM481 734h1v1h-1zM499 734h1v1h-1zM518 734h1v1h-1zM536 734h1v1h-1zM554 734h1v1h-1zM572 734h1v1h-1zM590 734h1v1h-1zM608 734h1v1h-1zM627 734h1v1h-1zM645 734h1v1h-1zM663 734h1v1h-1zM681 734h1v1h-1zM699 734h1v1h-1zM717 734h1v1h-1zM736 734h1v1h-1zM754 734h1v1h-1zM772 734h1v1h-1zM790 734h1v1h-1zM808 734h1v1h-1zM826 734h1v1h-1zM845 734h1v1h-1zM863 734h1v1h-1zM881 734h1v1h-1zM899 734h1v1h-1zM917 734h1v1h-1zM935 734h1v1h-1zM954 734h1v1h-1zM9 752h1v1h-1zM27 752h1v1h-1zM45 752h1v1h-1zM63 752h1v1h-1zM82 752h1v1h-1zM100 752h1v1h-1zM118 752h1v1h-1zM136 752h1v1h-1zM154 752h1v1h-1zM172 752h1v1h-1zM191 752h1v1h-1zM209 752h1v1h-1zM227 752h1v1h-1zM245 752h1v1h-1zM263 752h1v1h-1zM281 752h1v1h-1zM300 752h1v1h-1zM318 752h1v1h-1zM336 752h1v1h-1zM354 752h1v1h-1zM372 752h1v1h-1zM390 752h1v1h-1zM409 752h1v1h-1zM427 752h1v1h-1zM445 752h1v1h-1zM463 752h1v1h-1zM481 752h1v1h-1zM499 752h1v1h-1zM518 752h1v1h-1zM536 752h1v1h-1zM554 752h1v1h-1zM572 752h1v1h-1zM590 752h1v1h-1zM608 752h1v1h-1zM627 752h1v1h-1zM645 752h1v1h-1zM663 752h1v1h-1zM681 752h1v1h-1zM699 752h1v1h-1zM717 752h1v1h-1zM736 752h1v1h-1zM754 752h1v1h-1zM772 752h1v1h-1zM790 752h1v1h-1zM808 752h1v1h-1zM826 752h1v1h-1zM845 752h1v1h-1zM863 752h1v1h-1zM881 752h1v1h-1zM899 752h1v1h-1zM917 752h1v1h-1zM935 752h1v1h-1zM954 752h1v1h-1zM9 770h1v1h-1zM27 770h1v1h-1zM45 770h1v1h-1zM63 770h1v1h-1zM82 770h1v1h-1zM100 770h1v1h-1zM118 770h1v1h-1zM136 770h1v1h-1zM154 770h1v1h-1zM172 770h1v1h-1zM191 770h1v1h-1zM209 770h1v1h-1zM227 770h1v1h-1zM245 770h1v1h-1zM263 770h1v1h-1zM281 770h1v1h-1zM300 770h1v1h-1zM318 770h1v1h-1zM336 770h1v1h-1zM354 770h1v1h-1zM372 770h1v1h-1zM390 770h1v1h-1zM409 770h1v1h-1zM427 770h1v1h-1zM445 770h1v1h-1zM463 770h1v1h-1zM481 770h1v1h-1zM499 770h1v1h-1zM518 770h1v1h-1zM536 770h1v1h-1zM554 770h1v1h-1zM572 770h1v1h-1zM590 770h1v1h-1zM608 770h1v1h-1zM627 770h1v1h-1zM645 770h1v1h-1zM663 770h1v1h-1zM681 770h1v1h-1zM699 770h1v1h-1zM717 770h1v1h-1zM736 770h1v1h-1zM754 770h1v1h-1zM772 770h1v1h-1zM790 770h1v1h-1zM808 770h1v1h-1zM826 770h1v1h-1zM845 770h1v1h-1zM863 770h1v1h-1zM881 770h1v1h-1zM899 770h1v1h-1zM917 770h1v1h-1zM935 770h1v1h-1zM954 770h1v1h-1zM9 788h1v1h-1zM27 788h1v1h-1zM45 788h1v1h-1zM63 788h1v1h-1zM82 788h1v1h-1zM100 788h1v1h-1zM118 788h1v1h-1zM136 788h1v1h-1zM154 788h1v1h-1zM172 788h1v1h-1zM191 788h1v1h-1zM209 788h1v1h-1zM227 788h1v1h-1zM245 788h1v1h-1zM263 788h1v1h-1zM281 788h1v1h-1zM300 788h1v1h-1zM318 788h1v1h-1zM336 788h1v1h-1zM354 788h1v1h-1zM372 788h1v1h-1zM390 788h1v1h-1zM409 788h1v1h-1zM427 788h1v1h-1zM445 788h1v1h-1zM463 788h1v1h-1zM481 788h1v1h-1zM499 788h1v1h-1zM518 788h1v1h-1zM536 788h1v1h-1zM554 788h1v1h-1zM572 788h1v1h-1zM590 788h1v1h-1zM608 788h1v1h-1zM627 788h1v1h-1zM645 788h1v1h-1zM663 788h1v1h-1zM681 788h1v1h-1zM699 788h1v1h-1zM717 788h1v1h-1zM736 788h1v1h-1zM754 788h1v1h-1zM772 788h1v1h-1zM790 788h1v1h-1zM808 788h1v1h-1zM826 788h1v1h-1zM845 788h1v1h-1zM863 788h1v1h-1zM881 788h1v1h-1zM899 788h1v1h-1zM917 788h1v1h-1zM935 788h1v1h-1zM954 788h1v1h-1zM9 807h1v1h-1zM27 807h1v1h-1zM45 807h1v1h-1zM63 807h1v1h-1zM82 807h1v1h-1zM100 807h1v1h-1zM118 807h1v1h-1zM136 807h1v1h-1zM154 807h1v1h-1zM172 807h1v1h-1zM191 807h1v1h-1zM209 807h1v1h-1zM227 807h1v1h-1zM245 807h1v1h-1zM263 807h1v1h-1zM281 807h1v1h-1zM300 807h1v1h-1zM318 807h1v1h-1zM336 807h1v1h-1zM354 807h1v1h-1zM372 807h1v1h-1zM390 807h1v1h-1zM409 807h1v1h-1zM427 807h1v1h-1zM445 807h1v1h-1zM463 807h1v1h-1zM481 807h1v1h-1zM499 807h1v1h-1zM518 807h1v1h-1zM536 807h1v1h-1zM554 807h1v1h-1zM572 807h1v1h-1zM590 807h1v1h-1zM608 807h1v1h-1zM627 807h1v1h-1zM645 807h1v1h-1zM663 807h1v1h-1zM681 807h1v1h-1zM699 807h1v1h-1zM717 807h1v1h-1zM736 807h1v1h-1zM754 807h1v1h-1zM772 807h1v1h-1zM790 807h1v1h-1zM808 807h1v1h-1zM826 807h1v1h-1zM845 807h1v1h-1zM863 807h1v1h-1zM881 807h1v1h-1zM899 807h1v1h-1zM917 807h1v1h-1zM935 807h1v1h-1zM954 807h1v1h-1zM9 825h1v1h-1zM27 825h1v1h-1zM45 825h1v1h-1zM63 825h1v1h-1zM82 825h1v1h-1zM100 825h1v1h-1zM118 825h1v1h-1zM136 825h1v1h-1zM154 825h1v1h-1zM172 825h1v1h-1zM191 825h1v1h-1zM209 825h1v1h-1zM227 825h1v1h-1zM245 825h1v1h-1zM263 825h1v1h-1zM281 825h1v1h-1zM300 825h1v1h-1zM318 825h1v1h-1zM336 825h1v1h-1zM354 825h1v1h-1zM372 825h1v1h-1zM390 825h1v1h-1zM409 825h1v1h-1zM427 825h1v1h-1zM445 825h1v1h-1zM463 825h1v1h-1zM481 825h1v1h-1zM499 825h1v1h-1zM518 825h1v1h-1zM536 825h1v1h-1zM554 825h1v1h-1zM572 825h1v1h-1zM590 825h1v1h-1zM608 825h1v1h-1zM627 825h1v1h-1zM645 825h1v1h-1zM663 825h1v1h-1zM681 825h1v1h-1zM699 825h1v1h-1zM717 825h1v1h-1zM736 825h1v1h-1zM754 825h1v1h-1zM772 825h1v1h-1zM790 825h1v1h-1zM808 825h1v1h-1zM826 825h1v1h-1zM845 825h1v1h-1zM863 825h1v1h-1zM881 825h1v1h-1zM899 825h1v1h-1zM917 825h1v1h-1zM935 825h1v1h-1zM954 825h1v1h-1zM9 843h1v1h-1zM27 843h1v1h-1zM45 843h1v1h-1zM63 843h1v1h-1zM82 843h1v1h-1zM100 843h1v1h-1zM118 843h1v1h-1zM136 843h1v1h-1zM154 843h1v1h-1zM172 843h1v1h-1zM191 843h1v1h-1zM209 843h1v1h-1zM227 843h1v1h-1zM245 843h1v1h-1zM263 843h1v1h-1zM281 843h1v1h-1zM300 843h1v1h-1zM318 843h1v1h-1zM336 843h1v1h-1zM354 843h1v1h-1zM372 843h1v1h-1zM390 843h1v1h-1zM409 843h1v1h-1zM427 843h1v1h-1zM445 843h1v1h-1zM463 843h1v1h-1zM481 843h1v1h-1zM499 843h1v1h-1zM518 843h1v1h-1zM536 843h1v1h-1zM554 843h1v1h-1zM572 843h1v1h-1zM590 843h1v1h-1zM608 843h1v1h-1zM627 843h1v1h-1zM645 843h1v1h-1zM663 843h1v1h-1zM681 843h1v1h-1zM699 843h1v1h-1zM717 843h1v1h-1zM736 843h1v1h-1zM754 843h1v1h-1zM772 843h1v1h-1zM790 843h1v1h-1zM808 843h1v1h-1zM826 843h1v1h-1zM845 843h1v1h-1zM863 843h1v1h-1zM881 843h1v1h-1zM899 843h1v1h-1zM917 843h1v1h-1zM935 843h1v1h-1zM954 843h1v1h-1zM9 861h1v1h-1zM27 861h1v1h-1zM45 861h1v1h-1zM63 861h1v1h-1zM82 861h1v1h-1zM100 861h1v1h-1zM118 861h1v1h-1zM136 861h1v1h-1zM154 861h1v1h-1zM172 861h1v1h-1zM191 861h1v1h-1zM209 861h1v1h-1zM227 861h1v1h-1zM245 861h1v1h-1zM263 861h1v1h-1zM281 861h1v1h-1zM300 861h1v1h-1zM318 861h1v1h-1zM336 861h1v1h-1zM354 861h1v1h-1zM372 861h1v1h-1zM390 861h1v1h-1zM409 861h1v1h-1zM427 861h1v1h-1zM445 861h1v1h-1zM463 861h1v1h-1zM481 861h1v1h-1zM499 861h1v1h-1zM518 861h1v1h-1zM536 861h1v1h-1zM554 861h1v1h-1zM572 861h1v1h-1zM590 861h1v1h-1zM608 861h1v1h-1zM627 861h1v1h-1zM645 861h1v1h-1zM663 861h1v1h-1zM681 861h1v1h-1zM699 861h1v1h-1zM717 861h1v1h-1zM736 861h1v1h-1zM754 861h1v1h-1zM772 861h1v1h-1zM790 861h1v1h-1zM808 861h1v1h-1zM826 861h1v1h-1zM845 861h1v1h-1zM863 861h1v1h-1zM881 861h1v1h-1zM899 861h1v1h-1zM917 861h1v1h-1zM935 861h1v1h-1zM954 861h1v1h-1zM9 879h1v1h-1zM27 879h1v1h-1zM45 879h1v1h-1zM63 879h1v1h-1zM82 879h1v1h-1zM100 879h1v1h-1zM118 879h1v1h-1zM136 879h1v1h-1zM154 879h1v1h-1zM172 879h1v1h-1zM191 879h1v1h-1zM209 879h1v1h-1zM227 879h1v1h-1zM245 879h1v1h-1zM263 879h1v1h-1zM281 879h1v1h-1zM300 879h1v1h-1zM318 879h1v1h-1zM336 879h1v1h-1zM354 879h1v1h-1zM372 879h1v1h-1zM390 879h1v1h-1zM409 879h1v1h-1zM427 879h1v1h-1zM445 879h1v1h-1zM463 879h1v1h-1zM481 879h1v1h-1zM499 879h1v1h-1zM518 879h1v1h-1zM536 879h1v1h-1zM554 879h1v1h-1zM572 879h1v1h-1zM590 879h1v1h-1zM608 879h1v1h-1zM627 879h1v1h-1zM645 879h1v1h-1zM663 879h1v1h-1zM681 879h1v1h-1zM699 879h1v1h-1zM717 879h1v1h-1zM736 879h1v1h-1zM754 879h1v1h-1zM772 879h1v1h-1zM790 879h1v1h-1zM808 879h1v1h-1zM826 879h1v1h-1zM845 879h1v1h-1zM863 879h1v1h-1zM881 879h1v1h-1zM899 879h1v1h-1zM917 879h1v1h-1zM935 879h1v1h-1zM954 879h1v1h-1zM9 897h1v1h-1zM27 897h1v1h-1zM45 897h1v1h-1zM63 897h1v1h-1zM82 897h1v1h-1zM100 897h1v1h-1zM118 897h1v1h-1zM136 897h1v1h-1zM154 897h1v1h-1zM172 897h1v1h-1zM191 897h1v1h-1zM209 897h1v1h-1zM227 897h1v1h-1zM245 897h1v1h-1zM263 897h1v1h-1zM281 897h1v1h-1zM300 897h1v1h-1zM318 897h1v1h-1zM336 897h1v1h-1zM354 897h1v1h-1zM372 897h1v1h-1zM390 897h1v1h-1zM409 897h1v1h-1zM427 897h1v1h-1zM445 897h1v1h-1zM463 897h1v1h-1zM481 897h1v1h-1zM499 897h1v1h-1zM518 897h1v1h-1zM536 897h1v1h-1zM554 897h1v1h-1zM572 897h1v1h-1zM590 897h1v1h-1zM608 897h1v1h-1zM627 897h1v1h-1zM645 897h1v1h-1zM663 897h1v1h-1zM681 897h1v1h-1zM699 897h1v1h-1zM717 897h1v1h-1zM736 897h1v1h-1zM754 897h1v1h-1zM772 897h1v1h-1zM790 897h1v1h-1zM808 897h1v1h-1zM826 897h1v1h-1zM845 897h1v1h-1zM863 897h1v1h-1zM881 897h1v1h-1zM899 897h1v1h-1zM917 897h1v1h-1zM935 897h1v1h-1zM954 897h1v1h-1zM9 916h1v1h-1zM27 916h1v1h-1zM45 916h1v1h-1zM63 916h1v1h-1zM82 916h1v1h-1zM100 916h1v1h-1zM118 916h1v1h-1zM136 916h1v1h-1zM154 916h1v1h-1zM172 916h1v1h-1zM191 916h1v1h-1zM209 916h1v1h-1zM227 916h1v1h-1zM245 916h1v1h-1zM263 916h1v1h-1zM281 916h1v1h-1zM300 916h1v1h-1zM318 916h1v1h-1zM336 916h1v1h-1zM354 916h1v1h-1zM372 916h1v1h-1zM390 916h1v1h-1zM409 916h1v1h-1zM427 916h1v1h-1zM445 916h1v1h-1zM463 916h1v1h-1zM481 916h1v1h-1zM499 916h1v1h-1zM518 916h1v1h-1zM536 916h1v1h-1zM554 916h1v1h-1zM572 916h1v1h-1zM590 916h1v1h-1zM608 916h1v1h-1zM627 916h1v1h-1zM645 916h1v1h-1zM663 916h1v1h-1zM681 916h1v1h-1zM699 916h1v1h-1zM717 916h1v1h-1zM736 916h1v1h-1zM754 916h1v1h-1zM772 916h1v1h-1zM790 916h1v1h-1zM808 916h1v1h-1zM826 916h1v1h-1zM845 916h1v1h-1zM863 916h1v1h-1zM881 916h1v1h-1zM899 916h1v1h-1zM917 916h1v1h-1zM935 916h1v1h-1zM954 916h1v1h-1zM9 934h1v1h-1zM27 934h1v1h-1zM45 934h1v1h-1zM63 934h1v1h-1zM82 934h1v1h-1zM100 934h1v1h-1zM118 934h1v1h-1zM136 934h1v1h-1zM154 934h1v1h-1zM172 934h1v1h-1zM191 934h1v1h-1zM209 934h1v1h-1zM227 934h1v1h-1zM245 934h1v1h-1zM263 934h1v1h-1zM281 934h1v1h-1zM300 934h1v1h-1zM318 934h1v1h-1zM336 934h1v1h-1zM354 934h1v1h-1zM372 934h1v1h-1zM390 934h1v1h-1zM409 934h1v1h-1zM427 934h1v1h-1zM445 934h1v1h-1zM463 934h1v1h-1zM481 934h1v1h-1zM499 934h1v1h-1zM518 934h1v1h-1zM536 934h1v1h-1zM554 934h1v1h-1zM572 934h1v1h-1zM590 934h1v1h-1zM608 934h1v1h-1zM627 934h1v1h-1zM645 934h1v1h-1zM663 934h1v1h-1zM681 934h1v1h-1zM699 934h1v1h-1zM717 934h1v1h-1zM736 934h1v1h-1zM754 934h1v1h-1zM772 934h1v1h-1zM790 934h1v1h-1zM808 934h1v1h-1zM826 934h1v1h-1zM845 934h1v1h-1zM863 934h1v1h-1zM881 934h1v1h-1zM899 934h1v1h-1zM917 934h1v1h-1zM935 934h1v1h-1zM954 934h1v1h-1zM9 952h1v1h-1zM27 952h1v1h-1zM45 952h1v1h-1zM63 952h1v1h-1zM82 952h1v1h-1zM100 952h1v1h-1zM118 952h1v1h-1zM136 952h1v1h-1zM154 952h1v1h-1zM172 952h1v1h-1zM191 952h1v1h-1zM209 952h1v1h-1zM227 952h1v1h-1zM245 952h1v1h-1zM263 952h1v1h-1zM281 952h1v1h-1zM300 952h1v1h-1zM318 952h1v1h-1zM336 952h1v1h-1zM354 952h1v1h-1zM372 952h1v1h-1zM390 952h1v1h-1zM409 952h1v1h-1zM427 952h1v1h-1zM445 952h1v1h-1zM463 952h1v1h-1zM481 952h1v1h-1zM499 952h1v1h-1zM518 952h1v1h-1zM536 952h1v1h-1zM554 952h1v1h-1zM572 952h1v1h-1zM590 952h1v1h-1zM608 952h1v1h-1zM627 952h1v1h-1zM645 952h1v1h-1zM663 952h1v1h-1zM681 952h1v1h-1zM699 952h1v1h-1zM717 952h1v1h-1zM736 952h1v1h-1zM754 952h1v1h-1zM772 952h1v1h-1zM790 952h1v1h-1zM808 952h1v1h-1zM826 952h1v1h-1zM845 952h1v1h-1zM863 952h1v1h-1zM881 952h1v1h-1zM899 952h1v1h-1zM917 952h1v1h-1zM935 952h1v1h-1zM954 952h1v1h-1zM9 970h1v1h-1zM27 970h1v1h-1zM45 970h1v1h-1zM63 970h1v1h-1zM82 970h1v1h-1zM100 970h1v1h-1zM118 970h1v1h-1zM136 970h1v1h-1zM154 970h1v1h-1zM172 970h1v1h-1zM191 970h1v1h-1zM209 970h1v1h-1zM227 970h1v1h-1zM245 970h1v1h-1zM263 970h1v1h-1zM281 970h1v1h-1zM300 970h1v1h-1zM318 970h1v1h-1zM336 970h1v1h-1zM354 970h1v1h-1zM372 970h1v1h-1zM390 970h1v1h-1zM409 970h1v1h-1zM427 970h1v1h-1zM445 970h1v1h-1zM463 970h1v1h-1zM481 970h1v1h-1zM499 970h1v1h-1zM518 970h1v1h-1zM536 970h1v1h-1zM554 970h1v1h-1zM572 970h1v1h-1zM590 970h1v1h-1zM608 970h1v1h-1zM627 970h1v1h-1zM645 970h1v1h-1zM663 970h1v1h-1zM681 970h1v1h-1zM699 970h1v1h-1zM717 970h1v1h-1zM736 970h1v1h-1zM754 970h1v1h-1zM772 970h1v1h-1zM790 970h1v1h-1zM808 970h1v1h-1zM826 970h1v1h-1zM845 970h1v1h-1zM863 970h1v1h-1zM881 970h1v1h-1zM899 970h1v1h-1zM917 970h1v1h-1zM935 970h1v1h-1zM954 970h1v1h-1zM9 988h1v1h-1zM27 988h1v1h-1zM45 988h1v1h-1zM63 988h1v1h-1zM82 988h1v1h-1zM100 988h1v1h-1zM118 988h1v1h-1zM136 988h1v1h-1zM154 988h1v1h-1zM172 988h1v1h-1zM191 988h1v1h-1zM209 988h1v1h-1zM227 988h1v1h-1zM245 988h1v1h-1zM263 988h1v1h-1zM281 988h1v1h-1zM300 988h1v1h-1zM318 988h1v1h-1zM336 988h1v1h-1zM354 988h1v1h-1zM372 988h1v1h-1zM390 988h1v1h-1zM409 988h1v1h-1zM427 988h1v1h-1zM445 988h1v1h-1zM463 988h1v1h-1zM481 988h1v1h-1zM499 988h1v1h-1zM518 988h1v1h-1zM536 988h1v1h-1zM554 988h1v1h-1zM572 988h1v1h-1zM590 988h1v1h-1zM608 988h1v1h-1zM627 988h1v1h-1zM645 988h1v1h-1zM663 988h1v1h-1zM681 988h1v1h-1zM699 988h1v1h-1zM717 988h1v1h-1zM736 988h1v1h-1zM754 988h1v1h-1zM772 988h1v1h-1zM790 988h1v1h-1zM808 988h1v1h-1zM826 988h1v1h-1zM845 988h1v1h-1zM863 988h1v1h-1zM881 988h1v1h-1zM899 988h1v1h-1zM917 988h1v1h-1zM935 988h1v1h-1zM954 988h1v1h-1zM9 1006h1v1h-1zM27 1006h1v1h-1zM45 1006h1v1h-1zM63 1006h1v1h-1zM82 1006h1v1h-1zM100 1006h1v1h-1zM118 1006h1v1h-1zM136 1006h1v1h-1zM154 1006h1v1h-1zM172 1006h1v1h-1zM191 1006h1v1h-1zM209 1006h1v1h-1zM227 1006h1v1h-1zM245 1006h1v1h-1zM263 1006h1v1h-1zM281 1006h1v1h-1zM300 1006h1v1h-1zM318 1006h1v1h-1zM336 1006h1v1h-1zM354 1006h1v1h-1zM372 1006h1v1h-1zM390 1006h1v1h-1zM409 1006h1v1h-1zM427 1006h1v1h-1zM445 1006h1v1h-1zM463 1006h1v1h-1zM481 1006h1v1h-1zM499 1006h1v1h-1zM518 1006h1v1h-1zM536 1006h1v1h-1zM554 1006h1v1h-1zM572 1006h1v1h-1zM590 1006h1v1h-1zM608 1006h1v1h-1zM627 1006h1v1h-1zM645 1006h1v1h-1zM663 1006h1v1h-1zM681 1006h1v1h-1zM699 1006h1v1h-1zM717 1006h1v1h-1zM736 1006h1v1h-1zM754 1006h1v1h-1zM772 1006h1v1h-1zM790 1006h1v1h-1zM808 1006h1v1h-1zM826 1006h1v1h-1zM845 1006h1v1h-1zM863 1006h1v1h-1zM881 1006h1v1h-1zM899 1006h1v1h-1zM917 1006h1v1h-1zM935 1006h1v1h-1zM954 1006h1v1h-1z"/><path d="M172 462L172 407L245 407" fill="none" stroke="#000" stroke-width="2" stroke-linejoin="miter"/><path d="M336 407L445 407" fill="none" stroke="#000" stroke-width="2" stroke-linejoin="miter"/><path d="M536 407L663 407L663 462" fill="none" stroke="#000" stroke-width="2" stroke-linejoin="miter"/><path d="M390 407L390 444" fill="none" stroke="#000" stroke-width="2" stroke-linejoin="miter"/><path d="M390 534L390 625" fill="none" stroke="#000" stroke-width="2" stroke-linejoin="miter"/><path d="M572 407L572 444" fill="none" stroke="#000" stroke-width="2" stroke-linejoin="miter"/><path d="M572 534L572 625" fill="none" stroke="#000" stroke-width="2" stroke-linejoin="miter"/><path d="M172 552L172 625L663 625L663 552" fill="none" stroke="#000" stroke-width="2" stroke-linejoin="miter"/><path d="M481 625L481 679" fill="none" stroke="#000" stroke-width="2" stroke-linejoin="miter"/><path d="M245 407L254.5 407L263 389.5L281.5 425.5L300 389.5L318 425.5L327.5 407L336 407" fill="none" stroke="#000080" stroke-width="2" stroke-linejoin="miter"/><path d="M445 407L454.5 407L463 389.5L481.5 425.5L500 389.5L518 425.5L527.5 407L536 407" fill="none" stroke="#000080" stroke-width="2" stroke-linejoin="miter"/><path d="M390 444L390 452L409 461.5L372.5 480.5L409 498.5L372.5 516.5L390 525L390 534" fill="none" stroke="#000080" stroke-width="2" stroke-linejoin="miter"/><path d="M572 444L572 452L591 461.5L554.5 480.5L591 498.5L554.5 516.5L572 525L572 534" fill="none" stroke="#000080" stroke-width="2" stroke-linejoin="miter"/><path d="M172 462V471.5M172 542.5V552" stroke="#000080" stroke-width="2"/><circle cx="172.5" cy="507" r="35.3" fill="none" stroke="#000080" stroke-width="2"/><path d="M163 484.5H182M172.5 475V494M163 530H182" stroke="#000080" stroke-width="2"/><path d="M663 462V471.5M663 542.5V552" stroke="#000080" stroke-width="2"/><circle cx="663" cy="507" r="35.3" fill="none" stroke="#000080" stroke-width="2"/><path d="M663 489V512" stroke="#000080" stroke-width="2"/><path d="M658.5 512.5H667.5L663 525Z" fill="none" stroke="#000080" stroke-width="1.6"/><path d="M461.5 679.5H502L481.5 700Z" fill="none" stroke="#0000ff" stroke-width="2"/><rect x="383" y="400" width="15" height="15" fill="#0000ff"/><rect x="565" y="400" width="15" height="15" fill="#0000ff"/><rect x="383" y="618" width="15" height="15" fill="#0000ff"/><rect x="474" y="618" width="15" height="15" fill="#0000ff"/><rect x="565" y="618" width="15" height="15" fill="#0000ff"/><text x="273" y="381.5" font-family="Liberation Serif" font-size="27" fill="#000">R1</text><text x="283" y="448.5" font-family="Liberation Serif" font-size="27" fill="#000">2</text><text x="473" y="381.5" font-family="Liberation Serif" font-size="27" fill="#000">R3</text><text x="483" y="448.5" font-family="Liberation Serif" font-size="27" fill="#000">3</text><text x="412.5" y="480" font-family="Liberation Serif" font-size="27" fill="#000">R2</text><text x="412.5" y="519.5" font-family="Liberation Serif" font-size="27" fill="#000">4</text><text x="594.5" y="480" font-family="Liberation Serif" font-size="27" fill="#000">R4</text><text x="595.5" y="520" font-family="Liberation Serif" font-size="27" fill="#000">5</text><text x="199.5" y="470" font-family="Liberation Serif" font-size="27" fill="#000">E</text><text x="200.5" y="561" font-family="Liberation Serif" font-size="27" fill="#000">8</text><text x="689" y="470" font-family="Liberation Serif" font-size="27" fill="#000">I1</text><text x="690" y="561" font-family="Liberation Serif" font-size="27" fill="#000">0.8</text><text x="372" y="400" font-family="Liberation Serif" font-size="27" fill="#0000ff">???</text><text x="554" y="400" font-family="Liberation Serif" font-size="27" fill="#0000ff">???</text><text x="136.5" y="716" font-family="Liberation Serif" font-size="27" fill="#000">.op</text></g></svg><div class="a" style="left:961px;top:0;width:959px;height:1045px;background:#fff"></div><div class="a" style="left:961px;top:0;width:16px;height:1045px;background:linear-gradient(to right,rgba(0,0,0,0.15) 0px,rgba(0,0,0,0.06) 5px,rgba(0,0,0,0.02) 10px,rgba(0,0,0,0) 16px)"></div><div class="a" style="left:1919px;top:0;width:1px;height:1045px;background:#a0a0a0"></div><svg class="a" style="left:965px;top:14px" width="17" height="14" viewBox="0 0 17 14"><path d="M3 1.5h12.5v10.5H2.5c-1 0-1.5-1-1.2-2L2 3c0.2-1 0.5-1.5 1-1.5z" fill="#ffe600" stroke="#1a1a40" stroke-width="1.2"/><text x="3.2" y="9.8" font-family="Liberation Sans" font-weight="bold" font-size="7" fill="#000" textLength="11" lengthAdjust="spacingAndGlyphs">PDF</text></svg><div class="a" style="left:990px;top:15px;width:14px;height:3px;background:#000"></div><div class="a" style="left:990px;top:20px;width:14px;height:3px;background:#000"></div><div class="a" style="left:990px;top:25px;width:14px;height:3px;background:#000"></div><div class="a" style="left:1010px;top:9px;width:62px;height:24px;background:#e5e5e5"></div><div class="a" style="left:1073px;top:9px;width:62px;height:24px;background:#e5e5e5"></div><div class="a" style="left:1136px;top:9px;width:62px;height:24px;background:#e5e5e5"></div><div class="a" style="left:1199px;top:9px;width:62px;height:24px;background:#e5e5e5"></div><div class="a" style="left:1262px;top:9px;width:62px;height:24px;background:#e5e5e5"></div><div class="a" style="left:1325px;top:9px;width:62px;height:24px;background:#e5e5e5"></div><div class="a" style="left:1388px;top:9px;width:62px;height:24px;background:#e5e5e5"></div><div class="a" style="left:1451px;top:9px;width:62px;height:24px;background:#e5e5e5"></div><div class="a" style="left:1514px;top:9px;width:62px;height:24px;background:#e5e5e5"></div><div class="a" style="left:1577px;top:9px;width:62px;height:24px;background:#e5e5e5"></div><div class="a" style="left:1640px;top:9px;width:62px;height:24px;background:#e5e5e5"></div><div class="a" style="left:1019px;top:14px;font-size:12px;line-height:14px;color:#000;white-space:pre">Home</div><svg class="a" style="left:1056px;top:17px" width="10" height="10" viewBox="0 0 10 10"><path d="M0.5 0.5L9.5 9.5M9.5 0.5L0.5 9.5" stroke="#333" stroke-width="0.95"/></svg><div class="a" style="left:1082px;top:14px;font-size:12px;line-height:14px;color:#000;white-space:pre">Fou...</div><svg class="a" style="left:1119px;top:17px" width="10" height="10" viewBox="0 0 10 10"><path d="M0.5 0.5L9.5 9.5M9.5 0.5L0.5 9.5" stroke="#333" stroke-width="0.95"/></svg><div class="a" style="left:1145px;top:14px;font-size:12px;line-height:14px;color:#000;white-space:pre">Elect...</div><svg class="a" style="left:1182px;top:17px" width="10" height="10" viewBox="0 0 10 10"><path d="M0.5 0.5L9.5 9.5M9.5 0.5L0.5 9.5" stroke="#333" stroke-width="0.95"/></svg><div class="a" style="left:1208px;top:14px;font-size:12px;line-height:14px;color:#000;white-space:pre">Circ...</div><svg class="a" style="left:1245px;top:17px" width="10" height="10" viewBox="0 0 10 10"><path d="M0.5 0.5L9.5 9.5M9.5 0.5L0.5 9.5" stroke="#333" stroke-width="0.95"/></svg><div class="a" style="left:1271px;top:14px;font-size:12px;line-height:14px;color:#000;white-space:pre">Elect...</div><svg class="a" style="left:1308px;top:17px" width="10" height="10" viewBox="0 0 10 10"><path d="M0.5 0.5L9.5 9.5M9.5 0.5L0.5 9.5" stroke="#333" stroke-width="0.95"/></svg><div class="a" style="left:1334px;top:14px;font-size:12px;line-height:14px;color:#000;white-space:pre">Basi...</div><svg class="a" style="left:1371px;top:17px" width="10" height="10" viewBox="0 0 10 10"><path d="M0.5 0.5L9.5 9.5M9.5 0.5L0.5 9.5" stroke="#333" stroke-width="0.95"/></svg><div class="a" style="left:1397px;top:14px;font-size:12px;line-height:14px;color:#000;white-space:pre">_Oc...</div><svg class="a" style="left:1434px;top:17px" width="10" height="10" viewBox="0 0 10 10"><path d="M0.5 0.5L9.5 9.5M9.5 0.5L0.5 9.5" stroke="#333" stroke-width="0.95"/></svg><div class="a" style="left:1460px;top:14px;font-size:12px;line-height:14px;color:#000;white-space:pre">Lan...</div><svg class="a" style="left:1497px;top:17px" width="10" height="10" viewBox="0 0 10 10"><path d="M0.5 0.5L9.5 9.5M9.5 0.5L0.5 9.5" stroke="#333" stroke-width="0.95"/></svg><div class="a" style="left:1523px;top:14px;font-size:12px;line-height:14px;color:#000;white-space:pre">Lan...</div><svg class="a" style="left:1560px;top:17px" width="10" height="10" viewBox="0 0 10 10"><path d="M0.5 0.5L9.5 9.5M9.5 0.5L0.5 9.5" stroke="#333" stroke-width="0.95"/></svg><div class="a" style="left:1586px;top:14px;font-size:12px;line-height:14px;color:#000;white-space:pre">Und...</div><svg class="a" style="left:1623px;top:17px" width="10" height="10" viewBox="0 0 10 10"><path d="M0.5 0.5L9.5 9.5M9.5 0.5L0.5 9.5" stroke="#333" stroke-width="0.95"/></svg><div class="a" style="left:1649px;top:14px;font-size:12px;line-height:14px;color:#000;white-space:pre">7e,...</div><svg class="a" style="left:1686px;top:17px" width="10" height="10" viewBox="0 0 10 10"><path d="M0.5 0.5L9.5 9.5M9.5 0.5L0.5 9.5" stroke="#333" stroke-width="0.95"/></svg><div class="a" style="left:1712px;top:14px;font-size:12px;line-height:14px;color:#000;white-space:pre">Ibra...</div><svg class="a" style="left:1749px;top:17px" width="10" height="10" viewBox="0 0 10 10"><path d="M0.5 0.5L9.5 9.5M9.5 0.5L0.5 9.5" stroke="#333" stroke-width="0.95"/></svg><div class="a" style="left:1800px;top:10px;width:11px;height:1px;background:#999"></div><div class="a" style="left:1845px;top:5px;width:10px;height:10px;border:1px solid #999"></div><svg class="a" style="left:1891px;top:5px" width="10" height="10" viewBox="0 0 10 10"><path d="M0 0L10 10M10 0L0 10" stroke="#999" stroke-width="1"/></svg><svg class="a" style="left:968px;top:40px" width="18" height="16" viewBox="0 0 18 16"><path d="M1 2c0-0.7 0.3-1 1-1h4.5l2 2h7.5c0.7 0 1 0.3 1 1v9.5c0 0.7-0.3 1-1 1H2c-0.7 0-1-0.3-1-1z" stroke="#222" stroke-width="1.3" fill="none"/></svg><svg class="a" style="left:996px;top:39px" width="18" height="17" viewBox="0 0 18 17"><path d="M4 5V2.5c0-0.8 0.5-1.5 1.5-1.5h6c1 0 1.5 0.7 1.5 1.5V5M4 12H2.5C1.5 12 1 11.5 1 10.5v-4C1 5.5 1.5 5 2.5 5h12c1 0 1.5 0.5 1.5 1.5v4c0 1-0.5 1.5-1.5 1.5H13M5.5 10h6c1 0 1.5 0.5 1.5 1.5v3c0 1-0.5 1.5-1.5 1.5h-6c-1 0-1.5-0.5-1.5-1.5v-3c0-1 0.5-1.5 1.5-1.5z" stroke="#222" stroke-width="1.3" fill="none"/></svg><div class="a" style="left:1021px;top:37px;width:1px;height:22px;background:#555"></div><div class="a" style="left:1226px;top:37px;width:1px;height:22px;background:#555"></div><div class="a" style="left:1402px;top:37px;width:1px;height:22px;background:#555"></div><div class="a" style="left:1029px;top:42px;font-size:12px;line-height:14px;color:#000;white-space:pre;letter-spacing:-0.2px">Страница:</div><div class="a" style="left:1091px;top:37px;width:40px;height:22px;border:1px solid #333;background:#fff"></div><div class="a" style="left:1112px;top:42px;font-size:12.5px;line-height:14px;color:#000;white-space:pre">27</div><div class="a" style="left:1133px;top:42px;font-size:12.5px;line-height:14px;color:#000;white-space:pre">/ 196</div><svg class="a" style="left:1175px;top:42px" width="14" height="12" viewBox="0 0 14 12"><path d="M13 6H1.5M6.5 1L1.5 6L6.5 11" stroke="#222" stroke-width="1.3" fill="none"/></svg><svg class="a" style="left:1203px;top:42px" width="14" height="12" viewBox="0 0 14 12"><path d="M1 6H12.5M7.5 1L12.5 6L7.5 11" stroke="#222" stroke-width="1.3" fill="none"/></svg><svg class="a" style="left:1237px;top:39px" width="18" height="18" viewBox="0 0 18 18"><rect x="1.5" y="1.5" width="15" height="15" rx="1.6" stroke="#222" stroke-width="1.3" fill="none"/><path d="M2 9H16" stroke="#7a7a7a" stroke-width="1.6"/></svg><svg class="a" style="left:1266px;top:40px" width="16" height="16" viewBox="0 0 16 16"><rect x="1.5" y="1.5" width="13" height="13" rx="1.6" stroke="#222" stroke-width="1.3" fill="none"/></svg><svg class="a" style="left:1293px;top:39px" width="17" height="18" viewBox="0 0 17 18"><path d="M11.5 2.5A6.8 6.8 0 0 0 6.2 15" stroke="#222" stroke-width="1.3" fill="none"/><path d="M6.3 10.5V15.6H1" stroke="#222" stroke-width="1.5" fill="none"/><path d="M12.8 5A6.8 6.8 0 0 1 8.5 15.7" stroke="#222" stroke-width="1.1" fill="none" stroke-dasharray="1 2.2"/></svg><svg class="a" style="left:1322px;top:39px" width="17" height="18" viewBox="0 0 17 18"><g transform="translate(17,0) scale(-1,1)"><path d="M11.5 2.5A6.8 6.8 0 0 0 6.2 15" stroke="#222" stroke-width="1.3" fill="none"/><path d="M6.3 10.5V15.6H1" stroke="#222" stroke-width="1.5" fill="none"/><path d="M12.8 5A6.8 6.8 0 0 1 8.5 15.7" stroke="#222" stroke-width="1.1" fill="none" stroke-dasharray="1 2.2"/></g></svg><svg class="a" style="left:1349px;top:39px" width="18" height="18" viewBox="0 0 18 18"><circle cx="7" cy="7" r="5.8" stroke="#222" stroke-width="1.3" fill="none"/><path d="M11.2 11.2L16.5 16.5" stroke="#222" stroke-width="1.3" fill="none"/><path d="M4.5 7H9.5" stroke="#222" stroke-width="1.3" fill="none"/></svg><svg class="a" style="left:1377px;top:39px" width="18" height="18" viewBox="0 0 18 18"><circle cx="7" cy="7" r="5.8" stroke="#222" stroke-width="1.3" fill="none"/><path d="M11.2 11.2L16.5 16.5" stroke="#222" stroke-width="1.3" fill="none"/><path d="M4.5 7H9.5M7 4.5V9.5" stroke="#222" stroke-width="1.3" fill="none"/></svg><div class="a" style="left:1410px;top:42px;font-size:12px;line-height:14px;color:#000;white-space:pre">Найти:</div><div class="a" style="left:1453px;top:37px;width:160px;height:22px;border:1px solid #7a7a7a;background:#fff"></div><svg class="a" style="left:1624px;top:42px" width="10" height="12" viewBox="0 0 10 12"><path d="M8 1L3 6L8 11" stroke="#999" stroke-width="2.2" fill="none"/></svg><svg class="a" style="left:1652px;top:42px" width="10" height="12" viewBox="0 0 10 12"><path d="M2 1L7 6L2 11" stroke="#999" stroke-width="2.2" fill="none"/></svg><div class="a" style="left:1676px;top:40px;font-size:15px;line-height:16px;color:#222;white-space:pre">A</div><div class="a" style="left:1686px;top:44px;font-size:11px;line-height:12px;color:#222;white-space:pre">ɑ</div><div class="a" style="left:961px;top:62px;width:958px;height:1px;background:#dadada"></div><div class="a" style="left:1903px;top:63px;width:16px;height:964px;background:#f0f0f0"></div><div class="a" style="left:1903px;top:116px;width:16px;height:645px;background:#cdcdcd"></div><svg class="a" style="left:1905px;top:67px" width="12" height="10" viewBox="0 0 12 10"><path d="M2 7L6 3L10 7" stroke="#555" stroke-width="2" fill="none"/></svg><svg class="a" style="left:1905px;top:1014px" width="12" height="10" viewBox="0 0 12 10"><path d="M2 3L6 7L10 3" stroke="#555" stroke-width="2" fill="none"/></svg><div class="a" style="left:961px;top:1027px;width:958px;height:17px;background:#f0f0f0"></div><div class="a" style="left:999px;top:1028px;width:878px;height:15px;background:#cdcdcd"></div><svg class="a" style="left:964px;top:1030px" width="10" height="12" viewBox="0 0 10 12"><path d="M7 2L3 6L7 10" stroke="#555" stroke-width="2" fill="none"/></svg><svg class="a" style="left:1888px;top:1030px" width="10" height="12" viewBox="0 0 10 12"><path d="M3 2L7 6L3 10" stroke="#555" stroke-width="2" fill="none"/></svg><svg class="a" style="left:1907px;top:1033px" width="9" height="9" viewBox="0 0 9 9"><path d="M6 0h2v2h-2zM3 3h2v2h-2zM6 3h2v2h-2zM0 6h2v2h-2zM3 6h2v2h-2zM6 6h2v2h-2z" fill="#b8b8b8"/></svg><div class="a" style="left:961px;top:1044px;width:959px;height:1px;background:#a0a0a0"></div><div class="a" style="left:1056px;top:106px;width:760px;height:2px;background:#8a8a8a"></div><div class="a" style="left:1220px;top:998px;width:432px;height:29px;border:1px solid #8a8a8a;border-bottom:none;background:linear-gradient(#e9f3fa,#e3eef6)"></div><svg class="a" style="left:1223px;top:1001px" width="15" height="15" viewBox="0 0 18 18"><path d="M1.6 1.5V16.5L13.5 8.5M1.6 1.5L4.5 3.5" fill="none" stroke="#000" stroke-width="1.3" stroke-linejoin="round"/><path d="M5.8 1H8L5.2 7.8L9.8 8.6H2.6L3.4 7.6Z" fill="#8b0000"/><path d="M8.8 1.4L17 1.1L16.2 2.9H14.8L12.6 8.8H11.4L12.8 3H9.2Z" fill="#8b0000"/></svg><div class="a" style="left:1242px;top:1003px;font-size:11px;line-height:13px;color:#111;white-space:pre;letter-spacing:-0.38px">Edit Text on the Schematic:</div><svg class="a" style="left:1637px;top:1005px" width="9" height="9" viewBox="0 0 9 9"><path d="M0.5 0.5L8.5 8.5M8.5 0.5L0.5 8.5" stroke="#222" stroke-width="1.1"/></svg><svg class="a" style="left:0;top:0;will-change:transform" width="1920" height="1045" viewBox="0 0 1920 1045"><text x="1364.6" y="97" font-family="Liberation Sans" font-size="17.5" font-weight="normal" font-style="normal" fill="#595959" textLength="84.40" lengthAdjust="spacingAndGlyphs">Chapter 3</text><text x="1470" y="97" font-family="Liberation Sans" font-size="17.5" font-weight="normal" font-style="normal" fill="#595959" textLength="347.00" lengthAdjust="spacingAndGlyphs">Basic DC Circuit Analysis and Simulation</text><text x="1056.0" y="174" font-family="Liberation Sans" font-size="25" font-weight="bold" font-style="normal" fill="#4f81c4" textLength="131.00" lengthAdjust="spacingAndGlyphs">Chapter 3</text><text x="1221.4" y="174" font-family="Liberation Sans" font-size="25" font-weight="bold" font-style="normal" fill="#4f81c4" textLength="544.60" lengthAdjust="spacingAndGlyphs">Basic DC Circuit Analysis and Simulation</text><text x="1056.5" y="222" font-family="Liberation Sans" font-size="19.5" font-weight="bold" font-style="normal" fill="#4f81c4" textLength="138.50" lengthAdjust="spacingAndGlyphs">3.1 Overview</text><text x="1055" y="245.5" font-family="Liberation Sans" font-size="16.5" font-weight="normal" font-style="normal" fill="#222" textLength="762.00" lengthAdjust="spacingAndGlyphs">In the last chapter, we have seen how to install LTspice, and also how to draw a schematic</text><text x="1056" y="269.5" font-family="Liberation Sans" font-size="16.5" font-weight="normal" font-style="normal" fill="#222" textLength="761.00" lengthAdjust="spacingAndGlyphs">and then simulate a circuit consisting of resistors, capacitors, transistors, and a DC voltage</text><text x="1056" y="293.5" font-family="Liberation Sans" font-size="16.5" font-weight="normal" font-style="normal" fill="#222" textLength="61.50" lengthAdjust="spacingAndGlyphs">source.</text><text x="1055" y="341.5" font-family="Liberation Sans" font-size="16.5" font-weight="normal" font-style="normal" fill="#222" textLength="762.00" lengthAdjust="spacingAndGlyphs">In this chapter, you will be learning how to draw the schematics, and also how to simulate</text><text x="1056" y="365.5" font-family="Liberation Sans" font-size="16.5" font-weight="normal" font-style="normal" fill="#222" textLength="761.00" lengthAdjust="spacingAndGlyphs">simple DC circuits. It is important that the readers complete Chapter 2 before starting to</text><text x="1056" y="389.5" font-family="Liberation Sans" font-size="16.5" font-weight="normal" font-style="normal" fill="#222" textLength="148.00" lengthAdjust="spacingAndGlyphs">read this chapter.</text><text x="1056.5" y="438" font-family="Liberation Sans" font-size="19.5" font-weight="bold" font-style="normal" fill="#4f81c4" textLength="305.50" lengthAdjust="spacingAndGlyphs">3.2 Simple 4-Resistor Circuit</text><text x="1055" y="461.5" font-family="Liberation Sans" font-size="16.5" font-weight="normal" font-style="normal" fill="#222" textLength="762.00" lengthAdjust="spacingAndGlyphs">Figure 3.1 shows the circuit that we will be analyzing. The circuit consists of four resistors</text><text x="1057" y="485.5" font-family="Liberation Sans" font-size="16.5" font-weight="normal" font-style="normal" fill="#222" textLength="752.50" lengthAdjust="spacingAndGlyphs">with R1 = R2 = 1 kΩ and R3 = R4 = 2 kΩ, and a 1.5 V DC power supply (e.g. a battery).</text><text x="1299" y="678" font-family="Liberation Sans" font-size="16.5" font-weight="normal" font-style="italic" fill="#222" textLength="272.50" lengthAdjust="spacingAndGlyphs">Figure 3.1 Circuit to be analyzed</text><text x="1057" y="725.5" font-family="Liberation Sans" font-size="16.5" font-weight="normal" font-style="normal" fill="#222" textLength="121.00" lengthAdjust="spacingAndGlyphs">The steps are:</text><text x="1056.5" y="773.5" font-family="Liberation Sans" font-size="16.5" font-weight="bold" font-style="normal" fill="#1a1a1a" textLength="188.00" lengthAdjust="spacingAndGlyphs">Draw the schematic</text><text x="1141" y="797.5" font-family="Liberation Sans" font-size="16.5" font-weight="normal" font-style="normal" fill="#222" textLength="650.00" lengthAdjust="spacingAndGlyphs">Place the resistors and the voltage source as in Figure 3.1. You can move the</text><text x="1141" y="821.5" font-family="Liberation Sans" font-size="16.5" font-weight="normal" font-style="normal" fill="#222" textLength="637.00" lengthAdjust="spacingAndGlyphs">resistor identifiers and their values using the <tspan font-weight="bold">Mode move</tspan> (M) button if you</text><text x="1142" y="845.5" font-family="Liberation Sans" font-size="16.5" font-weight="normal" font-style="normal" fill="#222" textLength="44.00" lengthAdjust="spacingAndGlyphs">wish.</text><text x="1140" y="893.5" font-family="Liberation Sans" font-size="16.5" font-weight="normal" font-style="normal" fill="#222" textLength="434.00" lengthAdjust="spacingAndGlyphs">Right-click on the components and set their values.</text><text x="1141" y="941.5" font-family="Liberation Sans" font-size="16.5" font-weight="normal" font-style="normal" fill="#222" textLength="609.00" lengthAdjust="spacingAndGlyphs">Give a name to your schematic. Click the <tspan font-weight="bold">Text</tspan> (T) button and enter text</text><text x="1141" y="965.5" font-family="Liberation Sans" font-size="16.5" font-weight="normal" font-style="normal" fill="#222" textLength="592.50" lengthAdjust="spacingAndGlyphs"><tspan font-weight="bold">SIMPLE RESISTIVE CIRCUIT</tspan> after selecting <tspan font-weight="bold">Comment</tspan> (Figure 3.2)</text><circle cx="1459.7" cy="91.4" r="3.2" fill="#595959"/><circle cx="1204.5" cy="166" r="6" fill="#4f81c4"/><circle cx="1129.5" cy="792.5" r="3" fill="#222"/><circle cx="1129.5" cy="888.5" r="3" fill="#222"/><circle cx="1129.5" cy="936.5" r="3" fill="#222"/><path d="M1269.0 519.7h1.2v1.2h-1.2zM1281.7 519.7h1.2v1.2h-1.2zM1294.4 519.7h1.2v1.2h-1.2zM1307.1 519.7h1.2v1.2h-1.2zM1319.8 519.7h1.2v1.2h-1.2zM1332.5 519.7h1.2v1.2h-1.2zM1345.2 519.7h1.2v1.2h-1.2zM1357.9 519.7h1.2v1.2h-1.2zM1370.6 519.7h1.2v1.2h-1.2zM1383.3 519.7h1.2v1.2h-1.2zM1396.0 519.7h1.2v1.2h-1.2zM1408.7 519.7h1.2v1.2h-1.2zM1421.4 519.7h1.2v1.2h-1.2zM1434.1 519.7h1.2v1.2h-1.2zM1446.8 519.7h1.2v1.2h-1.2zM1459.5 519.7h1.2v1.2h-1.2zM1472.2 519.7h1.2v1.2h-1.2zM1484.9 519.7h1.2v1.2h-1.2zM1497.6 519.7h1.2v1.2h-1.2zM1510.3 519.7h1.2v1.2h-1.2zM1523.0 519.7h1.2v1.2h-1.2zM1535.7 519.7h1.2v1.2h-1.2zM1548.4 519.7h1.2v1.2h-1.2zM1561.1 519.7h1.2v1.2h-1.2zM1573.8 519.7h1.2v1.2h-1.2zM1586.5 519.7h1.2v1.2h-1.2zM1599.2 519.7h1.2v1.2h-1.2zM1611.9 519.7h1.2v1.2h-1.2zM1269.0 532.3h1.2v1.2h-1.2zM1281.7 532.3h1.2v1.2h-1.2zM1294.4 532.3h1.2v1.2h-1.2zM1307.1 532.3h1.2v1.2h-1.2zM1319.8 532.3h1.2v1.2h-1.2zM1332.5 532.3h1.2v1.2h-1.2zM1345.2 532.3h1.2v1.2h-1.2zM1357.9 532.3h1.2v1.2h-1.2zM1370.6 532.3h1.2v1.2h-1.2zM1383.3 532.3h1.2v1.2h-1.2zM1396.0 532.3h1.2v1.2h-1.2zM1408.7 532.3h1.2v1.2h-1.2zM1421.4 532.3h1.2v1.2h-1.2zM1434.1 532.3h1.2v1.2h-1.2zM1446.8 532.3h1.2v1.2h-1.2zM1459.5 532.3h1.2v1.2h-1.2zM1472.2 532.3h1.2v1.2h-1.2zM1484.9 532.3h1.2v1.2h-1.2zM1497.6 532.3h1.2v1.2h-1.2zM1510.3 532.3h1.2v1.2h-1.2zM1523.0 532.3h1.2v1.2h-1.2zM1535.7 532.3h1.2v1.2h-1.2zM1548.4 532.3h1.2v1.2h-1.2zM1561.1 532.3h1.2v1.2h-1.2zM1573.8 532.3h1.2v1.2h-1.2zM1586.5 532.3h1.2v1.2h-1.2zM1599.2 532.3h1.2v1.2h-1.2zM1611.9 532.3h1.2v1.2h-1.2zM1269.0 545.0h1.2v1.2h-1.2zM1281.7 545.0h1.2v1.2h-1.2zM1294.4 545.0h1.2v1.2h-1.2zM1307.1 545.0h1.2v1.2h-1.2zM1319.8 545.0h1.2v1.2h-1.2zM1332.5 545.0h1.2v1.2h-1.2zM1345.2 545.0h1.2v1.2h-1.2zM1357.9 545.0h1.2v1.2h-1.2zM1370.6 545.0h1.2v1.2h-1.2zM1383.3 545.0h1.2v1.2h-1.2zM1396.0 545.0h1.2v1.2h-1.2zM1408.7 545.0h1.2v1.2h-1.2zM1421.4 545.0h1.2v1.2h-1.2zM1434.1 545.0h1.2v1.2h-1.2zM1446.8 545.0h1.2v1.2h-1.2zM1459.5 545.0h1.2v1.2h-1.2zM1472.2 545.0h1.2v1.2h-1.2zM1484.9 545.0h1.2v1.2h-1.2zM1497.6 545.0h1.2v1.2h-1.2zM1510.3 545.0h1.2v1.2h-1.2zM1523.0 545.0h1.2v1.2h-1.2zM1535.7 545.0h1.2v1.2h-1.2zM1548.4 545.0h1.2v1.2h-1.2zM1561.1 545.0h1.2v1.2h-1.2zM1573.8 545.0h1.2v1.2h-1.2zM1586.5 545.0h1.2v1.2h-1.2zM1599.2 545.0h1.2v1.2h-1.2zM1611.9 545.0h1.2v1.2h-1.2zM1269.0 557.6h1.2v1.2h-1.2zM1281.7 557.6h1.2v1.2h-1.2zM1294.4 557.6h1.2v1.2h-1.2zM1307.1 557.6h1.2v1.2h-1.2zM1319.8 557.6h1.2v1.2h-1.2zM1332.5 557.6h1.2v1.2h-1.2zM1345.2 557.6h1.2v1.2h-1.2zM1357.9 557.6h1.2v1.2h-1.2zM1370.6 557.6h1.2v1.2h-1.2zM1383.3 557.6h1.2v1.2h-1.2zM1396.0 557.6h1.2v1.2h-1.2zM1408.7 557.6h1.2v1.2h-1.2zM1421.4 557.6h1.2v1.2h-1.2zM1434.1 557.6h1.2v1.2h-1.2zM1446.8 557.6h1.2v1.2h-1.2zM1459.5 557.6h1.2v1.2h-1.2zM1472.2 557.6h1.2v1.2h-1.2zM1484.9 557.6h1.2v1.2h-1.2zM1497.6 557.6h1.2v1.2h-1.2zM1510.3 557.6h1.2v1.2h-1.2zM1523.0 557.6h1.2v1.2h-1.2zM1535.7 557.6h1.2v1.2h-1.2zM1548.4 557.6h1.2v1.2h-1.2zM1561.1 557.6h1.2v1.2h-1.2zM1573.8 557.6h1.2v1.2h-1.2zM1586.5 557.6h1.2v1.2h-1.2zM1599.2 557.6h1.2v1.2h-1.2zM1611.9 557.6h1.2v1.2h-1.2zM1269.0 570.2h1.2v1.2h-1.2zM1281.7 570.2h1.2v1.2h-1.2zM1294.4 570.2h1.2v1.2h-1.2zM1307.1 570.2h1.2v1.2h-1.2zM1319.8 570.2h1.2v1.2h-1.2zM1332.5 570.2h1.2v1.2h-1.2zM1345.2 570.2h1.2v1.2h-1.2zM1357.9 570.2h1.2v1.2h-1.2zM1370.6 570.2h1.2v1.2h-1.2zM1383.3 570.2h1.2v1.2h-1.2zM1396.0 570.2h1.2v1.2h-1.2zM1408.7 570.2h1.2v1.2h-1.2zM1421.4 570.2h1.2v1.2h-1.2zM1434.1 570.2h1.2v1.2h-1.2zM1446.8 570.2h1.2v1.2h-1.2zM1459.5 570.2h1.2v1.2h-1.2zM1472.2 570.2h1.2v1.2h-1.2zM1484.9 570.2h1.2v1.2h-1.2zM1497.6 570.2h1.2v1.2h-1.2zM1510.3 570.2h1.2v1.2h-1.2zM1523.0 570.2h1.2v1.2h-1.2zM1535.7 570.2h1.2v1.2h-1.2zM1548.4 570.2h1.2v1.2h-1.2zM1561.1 570.2h1.2v1.2h-1.2zM1573.8 570.2h1.2v1.2h-1.2zM1586.5 570.2h1.2v1.2h-1.2zM1599.2 570.2h1.2v1.2h-1.2zM1611.9 570.2h1.2v1.2h-1.2zM1269.0 582.8h1.2v1.2h-1.2zM1281.7 582.8h1.2v1.2h-1.2zM1294.4 582.8h1.2v1.2h-1.2zM1307.1 582.8h1.2v1.2h-1.2zM1319.8 582.8h1.2v1.2h-1.2zM1332.5 582.8h1.2v1.2h-1.2zM1345.2 582.8h1.2v1.2h-1.2zM1357.9 582.8h1.2v1.2h-1.2zM1370.6 582.8h1.2v1.2h-1.2zM1383.3 582.8h1.2v1.2h-1.2zM1396.0 582.8h1.2v1.2h-1.2zM1408.7 582.8h1.2v1.2h-1.2zM1421.4 582.8h1.2v1.2h-1.2zM1434.1 582.8h1.2v1.2h-1.2zM1446.8 582.8h1.2v1.2h-1.2zM1459.5 582.8h1.2v1.2h-1.2zM1472.2 582.8h1.2v1.2h-1.2zM1484.9 582.8h1.2v1.2h-1.2zM1497.6 582.8h1.2v1.2h-1.2zM1510.3 582.8h1.2v1.2h-1.2zM1523.0 582.8h1.2v1.2h-1.2zM1535.7 582.8h1.2v1.2h-1.2zM1548.4 582.8h1.2v1.2h-1.2zM1561.1 582.8h1.2v1.2h-1.2zM1573.8 582.8h1.2v1.2h-1.2zM1586.5 582.8h1.2v1.2h-1.2zM1599.2 582.8h1.2v1.2h-1.2zM1611.9 582.8h1.2v1.2h-1.2zM1269.0 595.5h1.2v1.2h-1.2zM1281.7 595.5h1.2v1.2h-1.2zM1294.4 595.5h1.2v1.2h-1.2zM1307.1 595.5h1.2v1.2h-1.2zM1319.8 595.5h1.2v1.2h-1.2zM1332.5 595.5h1.2v1.2h-1.2zM1345.2 595.5h1.2v1.2h-1.2zM1357.9 595.5h1.2v1.2h-1.2zM1370.6 595.5h1.2v1.2h-1.2zM1383.3 595.5h1.2v1.2h-1.2zM1396.0 595.5h1.2v1.2h-1.2zM1408.7 595.5h1.2v1.2h-1.2zM1421.4 595.5h1.2v1.2h-1.2zM1434.1 595.5h1.2v1.2h-1.2zM1446.8 595.5h1.2v1.2h-1.2zM1459.5 595.5h1.2v1.2h-1.2zM1472.2 595.5h1.2v1.2h-1.2zM1484.9 595.5h1.2v1.2h-1.2zM1497.6 595.5h1.2v1.2h-1.2zM1510.3 595.5h1.2v1.2h-1.2zM1523.0 595.5h1.2v1.2h-1.2zM1535.7 595.5h1.2v1.2h-1.2zM1548.4 595.5h1.2v1.2h-1.2zM1561.1 595.5h1.2v1.2h-1.2zM1573.8 595.5h1.2v1.2h-1.2zM1586.5 595.5h1.2v1.2h-1.2zM1599.2 595.5h1.2v1.2h-1.2zM1611.9 595.5h1.2v1.2h-1.2zM1269.0 608.1h1.2v1.2h-1.2zM1281.7 608.1h1.2v1.2h-1.2zM1294.4 608.1h1.2v1.2h-1.2zM1307.1 608.1h1.2v1.2h-1.2zM1319.8 608.1h1.2v1.2h-1.2zM1332.5 608.1h1.2v1.2h-1.2zM1345.2 608.1h1.2v1.2h-1.2zM1357.9 608.1h1.2v1.2h-1.2zM1370.6 608.1h1.2v1.2h-1.2zM1383.3 608.1h1.2v1.2h-1.2zM1396.0 608.1h1.2v1.2h-1.2zM1408.7 608.1h1.2v1.2h-1.2zM1421.4 608.1h1.2v1.2h-1.2zM1434.1 608.1h1.2v1.2h-1.2zM1446.8 608.1h1.2v1.2h-1.2zM1459.5 608.1h1.2v1.2h-1.2zM1472.2 608.1h1.2v1.2h-1.2zM1484.9 608.1h1.2v1.2h-1.2zM1497.6 608.1h1.2v1.2h-1.2zM1510.3 608.1h1.2v1.2h-1.2zM1523.0 608.1h1.2v1.2h-1.2zM1535.7 608.1h1.2v1.2h-1.2zM1548.4 608.1h1.2v1.2h-1.2zM1561.1 608.1h1.2v1.2h-1.2zM1573.8 608.1h1.2v1.2h-1.2zM1586.5 608.1h1.2v1.2h-1.2zM1599.2 608.1h1.2v1.2h-1.2zM1611.9 608.1h1.2v1.2h-1.2zM1269.0 620.7h1.2v1.2h-1.2zM1281.7 620.7h1.2v1.2h-1.2zM1294.4 620.7h1.2v1.2h-1.2zM1307.1 620.7h1.2v1.2h-1.2zM1319.8 620.7h1.2v1.2h-1.2zM1332.5 620.7h1.2v1.2h-1.2zM1345.2 620.7h1.2v1.2h-1.2zM1357.9 620.7h1.2v1.2h-1.2zM1370.6 620.7h1.2v1.2h-1.2zM1383.3 620.7h1.2v1.2h-1.2zM1396.0 620.7h1.2v1.2h-1.2zM1408.7 620.7h1.2v1.2h-1.2zM1421.4 620.7h1.2v1.2h-1.2zM1434.1 620.7h1.2v1.2h-1.2zM1446.8 620.7h1.2v1.2h-1.2zM1459.5 620.7h1.2v1.2h-1.2zM1472.2 620.7h1.2v1.2h-1.2zM1484.9 620.7h1.2v1.2h-1.2zM1497.6 620.7h1.2v1.2h-1.2zM1510.3 620.7h1.2v1.2h-1.2zM1523.0 620.7h1.2v1.2h-1.2zM1535.7 620.7h1.2v1.2h-1.2zM1548.4 620.7h1.2v1.2h-1.2zM1561.1 620.7h1.2v1.2h-1.2zM1573.8 620.7h1.2v1.2h-1.2zM1586.5 620.7h1.2v1.2h-1.2zM1599.2 620.7h1.2v1.2h-1.2zM1611.9 620.7h1.2v1.2h-1.2zM1269.0 633.4h1.2v1.2h-1.2zM1281.7 633.4h1.2v1.2h-1.2zM1294.4 633.4h1.2v1.2h-1.2zM1307.1 633.4h1.2v1.2h-1.2zM1319.8 633.4h1.2v1.2h-1.2zM1332.5 633.4h1.2v1.2h-1.2zM1345.2 633.4h1.2v1.2h-1.2zM1357.9 633.4h1.2v1.2h-1.2zM1370.6 633.4h1.2v1.2h-1.2zM1383.3 633.4h1.2v1.2h-1.2zM1396.0 633.4h1.2v1.2h-1.2zM1408.7 633.4h1.2v1.2h-1.2zM1421.4 633.4h1.2v1.2h-1.2zM1434.1 633.4h1.2v1.2h-1.2zM1446.8 633.4h1.2v1.2h-1.2zM1459.5 633.4h1.2v1.2h-1.2zM1472.2 633.4h1.2v1.2h-1.2zM1484.9 633.4h1.2v1.2h-1.2zM1497.6 633.4h1.2v1.2h-1.2zM1510.3 633.4h1.2v1.2h-1.2zM1523.0 633.4h1.2v1.2h-1.2zM1535.7 633.4h1.2v1.2h-1.2zM1548.4 633.4h1.2v1.2h-1.2zM1561.1 633.4h1.2v1.2h-1.2zM1573.8 633.4h1.2v1.2h-1.2zM1586.5 633.4h1.2v1.2h-1.2zM1599.2 633.4h1.2v1.2h-1.2zM1611.9 633.4h1.2v1.2h-1.2zM1269.0 646.0h1.2v1.2h-1.2zM1281.7 646.0h1.2v1.2h-1.2zM1294.4 646.0h1.2v1.2h-1.2zM1307.1 646.0h1.2v1.2h-1.2zM1319.8 646.0h1.2v1.2h-1.2zM1332.5 646.0h1.2v1.2h-1.2zM1345.2 646.0h1.2v1.2h-1.2zM1357.9 646.0h1.2v1.2h-1.2zM1370.6 646.0h1.2v1.2h-1.2zM1383.3 646.0h1.2v1.2h-1.2zM1396.0 646.0h1.2v1.2h-1.2zM1408.7 646.0h1.2v1.2h-1.2zM1421.4 646.0h1.2v1.2h-1.2zM1434.1 646.0h1.2v1.2h-1.2zM1446.8 646.0h1.2v1.2h-1.2zM1459.5 646.0h1.2v1.2h-1.2zM1472.2 646.0h1.2v1.2h-1.2zM1484.9 646.0h1.2v1.2h-1.2zM1497.6 646.0h1.2v1.2h-1.2zM1510.3 646.0h1.2v1.2h-1.2zM1523.0 646.0h1.2v1.2h-1.2zM1535.7 646.0h1.2v1.2h-1.2zM1548.4 646.0h1.2v1.2h-1.2zM1561.1 646.0h1.2v1.2h-1.2zM1573.8 646.0h1.2v1.2h-1.2zM1586.5 646.0h1.2v1.2h-1.2zM1599.2 646.0h1.2v1.2h-1.2zM1611.9 646.0h1.2v1.2h-1.2z" fill="#e6e6e6"/><path d="M1308 558.8L1308 545.5L1377.5 545.5" fill="none" stroke="#9a9a9a" stroke-width="1.3"/><path d="M1433.8 545.5L1491.4 545.5" fill="none" stroke="#9a9a9a" stroke-width="1.3"/><path d="M1542.8 545.5L1573.9 545.5L1573.9 571.7" fill="none" stroke="#9a9a9a" stroke-width="1.3"/><path d="M1459.7 545.5L1459.7 571.7" fill="none" stroke="#9a9a9a" stroke-width="1.3"/><path d="M1459.7 632.7L1459.7 646.3" fill="none" stroke="#9a9a9a" stroke-width="1.3"/><path d="M1573.9 632.7L1573.9 646.3L1308 646.3L1308 621" fill="none" stroke="#9a9a9a" stroke-width="1.3"/><path d="M1377.5 545.5L1383.6 533L1396.3 557.3L1409 533L1421.6 557.3L1428.8 545.5L1433.8 545.5" fill="none" stroke="#8a8ac8" stroke-width="1.2"/><path d="M1491.4 545.5L1497.9 533L1510.5 557.3L1523.3 533L1535.9 557.3L1542.8 545.5" fill="none" stroke="#8a8ac8" stroke-width="1.2"/><path d="M1459.7 571.7L1459.7 576.7L1472.4 583.2L1447.5 596L1472.4 608.7L1447.5 621.2L1459.7 627.6L1459.7 632.7" fill="none" stroke="#8a8ac8" stroke-width="1.2"/><path d="M1573.9 571.7L1573.9 576.7L1586.6000000000001 583.2L1561.7 596L1586.6000000000001 608.7L1561.7 621.2L1573.9 627.6L1573.9 632.7" fill="none" stroke="#8a8ac8" stroke-width="1.2"/><path d="M1308 558.8L1308 564.4" fill="none" stroke="#8a8ac8" stroke-width="1.2"/><circle cx="1308" cy="589.6" r="25.3" fill="none" stroke="#8a8ac8" stroke-width="1.2"/><path d="M1301 573.8L1314.5 573.8" fill="none" stroke="#8a8ac8" stroke-width="1.2"/><path d="M1308 567.4L1308 580.8" fill="none" stroke="#8a8ac8" stroke-width="1.2"/><path d="M1301 605.4L1314.5 605.4" fill="none" stroke="#8a8ac8" stroke-width="1.2"/><path d="M1308 614.9L1308 621" fill="none" stroke="#8a8ac8" stroke-width="1.2"/><rect x="1456.2" y="542.0" width="7" height="7" fill="#3a48a0"/><rect x="1456.2" y="642.8" width="7" height="7" fill="#3a48a0"/><text x="1385" y="530.8" font-family="Liberation Sans" font-weight="bold" font-size="17.5" fill="#111" textLength="24.5" lengthAdjust="spacingAndGlyphs">R1</text><text x="1386.5" y="573.1" font-family="Liberation Sans" font-weight="bold" font-size="17.5" fill="#111" textLength="23" lengthAdjust="spacingAndGlyphs">1k</text><text x="1504" y="528.7" font-family="Liberation Sans" font-weight="bold" font-size="17.5" fill="#111" textLength="25" lengthAdjust="spacingAndGlyphs">R3</text><text x="1510" y="574.8" font-family="Liberation Sans" font-weight="bold" font-size="17.5" fill="#111" textLength="23.5" lengthAdjust="spacingAndGlyphs">2k</text><text x="1419.5" y="601.5" font-family="Liberation Sans" font-weight="bold" font-size="17.5" fill="#111" textLength="25" lengthAdjust="spacingAndGlyphs">R2</text><text x="1470.5" y="604" font-family="Liberation Sans" font-weight="bold" font-size="17.5" fill="#111" textLength="23" lengthAdjust="spacingAndGlyphs">1k</text><text x="1534.5" y="603.5" font-family="Liberation Sans" font-weight="bold" font-size="17.5" fill="#111" textLength="25.5" lengthAdjust="spacingAndGlyphs">R4</text><text x="1584.5" y="601.1" font-family="Liberation Sans" font-weight="bold" font-size="17.5" fill="#111" textLength="23.5" lengthAdjust="spacingAndGlyphs">2k</text><text x="1265.5" y="597.3" font-family="Liberation Sans" font-weight="bold" font-size="17.5" fill="#111" textLength="13.5" lengthAdjust="spacingAndGlyphs">V</text><text x="1336" y="599" font-family="Liberation Sans" font-weight="bold" font-size="17.5" fill="#111" textLength="28" lengthAdjust="spacingAndGlyphs">1.5</text></svg><div class="a" style="left:536px;top:646px;width:484px;height:341px;background:#fff;border:1px solid #5f5f5f;box-shadow:0 2px 18px 2px rgba(0,0,0,0.28)"></div><svg class="a" style="left:544px;top:652px" width="18" height="18" viewBox="0 0 18 18"><path d="M1.6 1.5V16.5L13.5 8.5M1.6 1.5L4.5 3.5" fill="none" stroke="#000" stroke-width="1.3" stroke-linejoin="round"/><path d="M5.8 1H8L5.2 7.8L9.8 8.6H2.6L3.4 7.6Z" fill="#8b0000"/><path d="M8.8 1.4L17 1.1L16.2 2.9H14.8L12.6 8.8H11.4L12.8 3H9.2Z" fill="#8b0000"/></svg><div class="a" style="left:566px;top:655px;font-size:12px;line-height:14px;color:#000;white-space:pre;letter-spacing:0.02px">C:\Users\Avian\Documents\LTspice\Draft2.net</div><svg class="a" style="left:999px;top:656px" width="10" height="10" viewBox="0 0 10 10"><path d="M0.5 0.5L9.5 9.5M9.5 0.5L0.5 9.5" stroke="#000" stroke-width="1.1"/></svg><div class="a" style="left:537px;top:677px;width:481px;height:2px;background:#6a6a6a"></div><div class="a" style="left:537px;top:677px;width:1px;height:309px;background:#a8a8a8"></div><div class="a" style="left:538px;top:677px;width:1px;height:308px;background:#666"></div><div class="a" style="left:1017px;top:679px;width:1px;height:306px;background:#e3e3e3"></div><div class="a" style="left:537px;top:985px;width:481px;height:1px;background:#e3e3e3"></div><div class="a" style="left:596px;top:681px;font-family:&quot;Liberation Mono&quot;,monospace;font-weight:bold;font-size:13.33px;line-height:16px;color:#000;white-space:pre">--- Operating Point ---</div><div class="a" style="left:540px;top:713px;font-family:&quot;Liberation Mono&quot;,monospace;font-weight:bold;font-size:13.33px;line-height:16px;color:#000;white-space:pre">V(n001):</div><div class="a" style="left:663px;top:713px;font-family:&quot;Liberation Mono&quot;,monospace;font-weight:bold;font-size:13.33px;line-height:16px;color:#000;white-space:pre">8</div><div class="a" style="left:778px;top:713px;font-family:&quot;Liberation Mono&quot;,monospace;font-weight:bold;font-size:13.33px;line-height:16px;color:#000;white-space:pre">voltage</div><div class="a" style="left:540px;top:729px;font-family:&quot;Liberation Mono&quot;,monospace;font-weight:bold;font-size:13.33px;line-height:16px;color:#000;white-space:pre">V(n002):</div><div class="a" style="left:663px;top:729px;font-family:&quot;Liberation Mono&quot;,monospace;font-weight:bold;font-size:13.33px;line-height:16px;color:#000;white-space:pre">4</div><div class="a" style="left:778px;top:729px;font-family:&quot;Liberation Mono&quot;,monospace;font-weight:bold;font-size:13.33px;line-height:16px;color:#000;white-space:pre">voltage</div><div class="a" style="left:540px;top:745px;font-family:&quot;Liberation Mono&quot;,monospace;font-weight:bold;font-size:13.33px;line-height:16px;color:#000;white-space:pre">V(n003):</div><div class="a" style="left:663px;top:745px;font-family:&quot;Liberation Mono&quot;,monospace;font-weight:bold;font-size:13.33px;line-height:16px;color:#000;white-space:pre">1</div><div class="a" style="left:778px;top:745px;font-family:&quot;Liberation Mono&quot;,monospace;font-weight:bold;font-size:13.33px;line-height:16px;color:#000;white-space:pre">voltage</div><div class="a" style="left:540px;top:761px;font-family:&quot;Liberation Mono&quot;,monospace;font-weight:bold;font-size:13.33px;line-height:16px;color:#000;white-space:pre">I(E):</div><div class="a" style="left:663px;top:761px;font-family:&quot;Liberation Mono&quot;,monospace;font-weight:bold;font-size:13.33px;line-height:16px;color:#000;white-space:pre">-2</div><div class="a" style="left:778px;top:761px;font-family:&quot;Liberation Mono&quot;,monospace;font-weight:bold;font-size:13.33px;line-height:16px;color:#000;white-space:pre">device_current</div><div class="a" style="left:540px;top:777px;font-family:&quot;Liberation Mono&quot;,monospace;font-weight:bold;font-size:13.33px;line-height:16px;color:#000;white-space:pre">I(I1):</div><div class="a" style="left:663px;top:777px;font-family:&quot;Liberation Mono&quot;,monospace;font-weight:bold;font-size:13.33px;line-height:16px;color:#000;white-space:pre">0.8</div><div class="a" style="left:778px;top:777px;font-family:&quot;Liberation Mono&quot;,monospace;font-weight:bold;font-size:13.33px;line-height:16px;color:#000;white-space:pre">device_current</div><div class="a" style="left:540px;top:793px;font-family:&quot;Liberation Mono&quot;,monospace;font-weight:bold;font-size:13.33px;line-height:16px;color:#000;white-space:pre">I(R1):</div><div class="a" style="left:663px;top:793px;font-family:&quot;Liberation Mono&quot;,monospace;font-weight:bold;font-size:13.33px;line-height:16px;color:#000;white-space:pre">-2</div><div class="a" style="left:778px;top:793px;font-family:&quot;Liberation Mono&quot;,monospace;font-weight:bold;font-size:13.33px;line-height:16px;color:#000;white-space:pre">device_current</div><div class="a" style="left:540px;top:809px;font-family:&quot;Liberation Mono&quot;,monospace;font-weight:bold;font-size:13.33px;line-height:16px;color:#000;white-space:pre">I(R2):</div><div class="a" style="left:663px;top:809px;font-family:&quot;Liberation Mono&quot;,monospace;font-weight:bold;font-size:13.33px;line-height:16px;color:#000;white-space:pre">1</div><div class="a" style="left:778px;top:809px;font-family:&quot;Liberation Mono&quot;,monospace;font-weight:bold;font-size:13.33px;line-height:16px;color:#000;white-space:pre">device_current</div><div class="a" style="left:540px;top:825px;font-family:&quot;Liberation Mono&quot;,monospace;font-weight:bold;font-size:13.33px;line-height:16px;color:#000;white-space:pre">I(R3):</div><div class="a" style="left:663px;top:825px;font-family:&quot;Liberation Mono&quot;,monospace;font-weight:bold;font-size:13.33px;line-height:16px;color:#000;white-space:pre">-1</div><div class="a" style="left:778px;top:825px;font-family:&quot;Liberation Mono&quot;,monospace;font-weight:bold;font-size:13.33px;line-height:16px;color:#000;white-space:pre">device_current</div><div class="a" style="left:540px;top:841px;font-family:&quot;Liberation Mono&quot;,monospace;font-weight:bold;font-size:13.33px;line-height:16px;color:#000;white-space:pre">I(R4):</div><div class="a" style="left:663px;top:841px;font-family:&quot;Liberation Mono&quot;,monospace;font-weight:bold;font-size:13.33px;line-height:16px;color:#000;white-space:pre">0.2</div><div class="a" style="left:778px;top:841px;font-family:&quot;Liberation Mono&quot;,monospace;font-weight:bold;font-size:13.33px;line-height:16px;color:#000;white-space:pre">device_current</div></body></html>
